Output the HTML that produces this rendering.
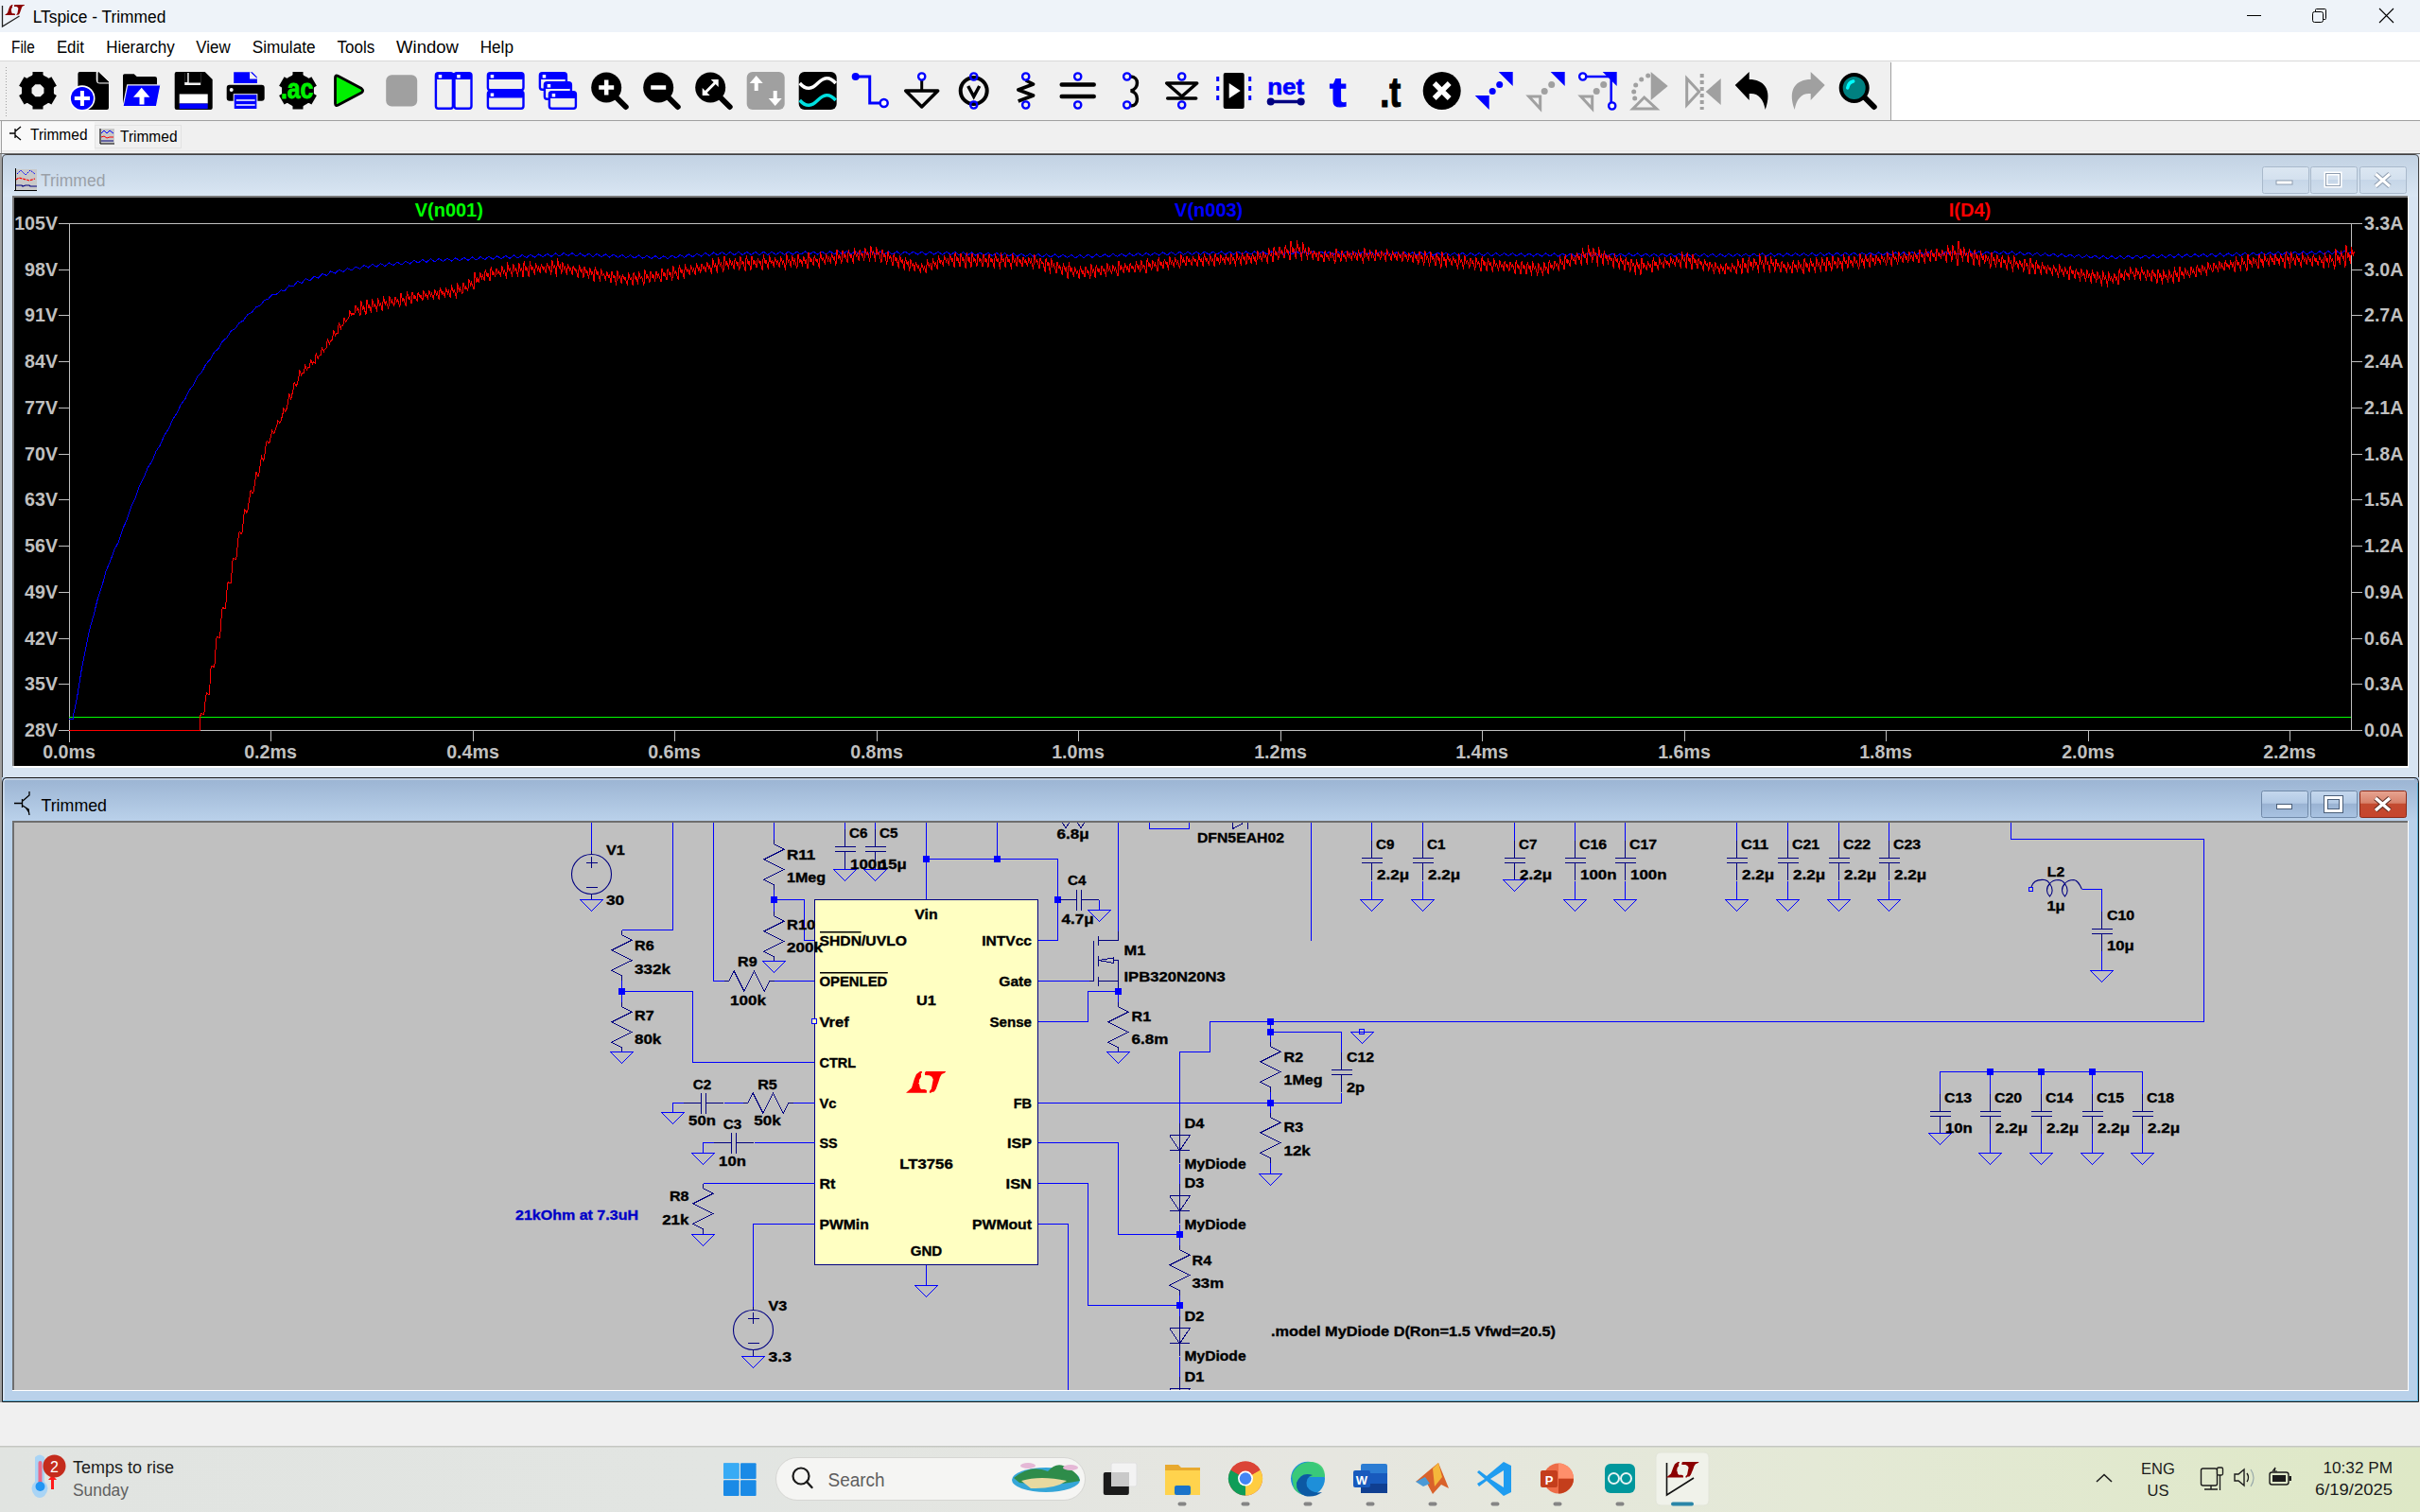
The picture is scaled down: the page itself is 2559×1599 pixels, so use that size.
<!DOCTYPE html><html><head><meta charset="utf-8"><title>LTspice - Trimmed</title><style>html,body{margin:0;padding:0;overflow:hidden;background:#f0f0f0;width:2559px;height:1599px}svg{display:block}text{white-space:pre}</style></head><body>
<svg width="2559" height="1599" viewBox="0 0 2559 1599">
<rect x="0" y="0" width="2559" height="1599" fill="#f0f0f0"/>
<rect x="0" y="0" width="2559" height="34" fill="#eef3f9"/>
<path d="M2.5,6 L2.5,28 L20.5,17" fill="none" stroke="#222" stroke-width="1.3"/>
<path transform="translate(5,5) scale(0.5,0.48)" d="M0.0,22.9 L6.0,17.5 L8.9,8.2 L11.0,3.2 L15.0,0.0 L16.9,0.0 L16.9,1.9 L15.9,2.1 L16.1,5.9 L14.0,9.0 L14.0,11.9 L12.9,12.5 L14.0,13.3 L14.8,17.5 L16.1,19.1 L19.8,19.1 L21.9,20.1 L21.9,22.9 Z M20.0,1.4 L21.1,0.0 L41.9,0.0 L41.9,0.8 L40.7,1.9 L37.8,3.2 L35.9,6.4 L34.6,10.6 L33.0,15.1 L31.7,18.8 L29.8,21.7 L26.9,22.0 L26.7,22.9 L24.9,22.9 L24.9,21.2 L26.9,18.6 L28.0,12.5 L28.8,8.5 L27.4,5.9 L24.8,4.3 L20.0,4.0 Z" fill="#8b0000"/>
<text x="34.7" y="23.6" font-family="Liberation Sans" font-size="17.5" font-weight="normal" fill="#000" text-anchor="start" textLength="140.7" lengthAdjust="spacingAndGlyphs">LTspice - Trimmed</text>
<line x1="2376" y1="16.5" x2="2391" y2="16.5" stroke="#000" stroke-width="1"/>
<rect x="2445.5" y="12.5" width="11" height="11" rx="2" fill="none" stroke="#000" stroke-width="1"/>
<path d="M2448.5,12.5 L2448.5,10.5 Q2448.5,9.5 2449.5,9.5 L2458.5,9.5 Q2459.5,9.5 2459.5,10.5 L2459.5,19.5 Q2459.5,20.5 2458.5,20.5 L2456.5,20.5" fill="none" stroke="#000" stroke-width="1"/>
<path d="M2516,9 L2531,24 M2531,9 L2516,24" stroke="#000" stroke-width="1.1"/>
<rect x="0" y="34" width="2559" height="30" fill="#ffffff"/>
<text x="12" y="55.8" font-family="Liberation Sans" font-size="18" font-weight="normal" fill="#000" text-anchor="start" textLength="24.8" lengthAdjust="spacingAndGlyphs">File</text>
<text x="59.9" y="55.8" font-family="Liberation Sans" font-size="18" font-weight="normal" fill="#000" text-anchor="start" textLength="29" lengthAdjust="spacingAndGlyphs">Edit</text>
<text x="112.2" y="55.8" font-family="Liberation Sans" font-size="18" font-weight="normal" fill="#000" text-anchor="start" textLength="72.5" lengthAdjust="spacingAndGlyphs">Hierarchy</text>
<text x="207.3" y="55.8" font-family="Liberation Sans" font-size="18" font-weight="normal" fill="#000" text-anchor="start" textLength="36.3" lengthAdjust="spacingAndGlyphs">View</text>
<text x="266.7" y="55.8" font-family="Liberation Sans" font-size="18" font-weight="normal" fill="#000" text-anchor="start" textLength="66.9" lengthAdjust="spacingAndGlyphs">Simulate</text>
<text x="356.6" y="55.8" font-family="Liberation Sans" font-size="18" font-weight="normal" fill="#000" text-anchor="start" textLength="39.6" lengthAdjust="spacingAndGlyphs">Tools</text>
<text x="419.1" y="55.8" font-family="Liberation Sans" font-size="18" font-weight="normal" fill="#000" text-anchor="start" textLength="65.7" lengthAdjust="spacingAndGlyphs">Window</text>
<text x="507.7" y="55.8" font-family="Liberation Sans" font-size="18" font-weight="normal" fill="#000" text-anchor="start" textLength="35.3" lengthAdjust="spacingAndGlyphs">Help</text>
<rect x="0" y="64" width="2559" height="1" fill="#d9d9d9"/>
<rect x="0" y="65" width="2000" height="62" fill="#f0f0f0"/>
<rect x="2000" y="65" width="559" height="62" fill="#ffffff"/>
<rect x="1999" y="66" width="1" height="61" fill="#a0a0a0"/>
<rect x="6" y="71" width="1" height="1" fill="#a0a0a0"/>
<rect x="6" y="74" width="1" height="1" fill="#a0a0a0"/>
<rect x="6" y="77" width="1" height="1" fill="#a0a0a0"/>
<rect x="6" y="80" width="1" height="1" fill="#a0a0a0"/>
<rect x="6" y="83" width="1" height="1" fill="#a0a0a0"/>
<rect x="6" y="86" width="1" height="1" fill="#a0a0a0"/>
<rect x="6" y="89" width="1" height="1" fill="#a0a0a0"/>
<rect x="6" y="92" width="1" height="1" fill="#a0a0a0"/>
<rect x="6" y="95" width="1" height="1" fill="#a0a0a0"/>
<rect x="6" y="98" width="1" height="1" fill="#a0a0a0"/>
<rect x="6" y="101" width="1" height="1" fill="#a0a0a0"/>
<rect x="6" y="104" width="1" height="1" fill="#a0a0a0"/>
<rect x="6" y="107" width="1" height="1" fill="#a0a0a0"/>
<rect x="6" y="110" width="1" height="1" fill="#a0a0a0"/>
<rect x="6" y="113" width="1" height="1" fill="#a0a0a0"/>
<rect x="6" y="116" width="1" height="1" fill="#a0a0a0"/>
<rect x="6" y="119" width="1" height="1" fill="#a0a0a0"/>
<rect x="6" y="122" width="1" height="1" fill="#a0a0a0"/>
<rect x="0" y="127" width="2559" height="1" fill="#a0a0a0"/>
<rect x="0" y="128" width="2559" height="35" fill="#f0f0f0"/>
<rect x="1" y="128" width="1" height="35" fill="#a0a0a0"/>
<rect x="2" y="129" width="98" height="30" fill="#f9f9f9"/>
<rect x="100.5" y="132.5" width="91" height="24" fill="#f0f0f0" stroke="#e3e3e3" stroke-width="1"/>
<path d="M10,141 L16,141 M16,136 L16,146 M16,139 L22,134 M16,143 L22,148" stroke="#000" stroke-width="1.3" fill="none"/>
<text x="32" y="148" font-family="Liberation Sans" font-size="16.5" font-weight="normal" fill="#000" text-anchor="start" textLength="60.5" lengthAdjust="spacingAndGlyphs">Trimmed</text>
<g transform="translate(105,136)"><rect x="0" y="0" width="16" height="16" fill="#c8c8c8"/><path d="M1,0 L1,16 L16,16" stroke="#000" stroke-width="1" fill="none"/><path d="M2,5 L5,2 L8,5 L11,2 L15,5" stroke="#0000ff" stroke-width="1" fill="none"/><path d="M2,9 L5,8 L8,10 L11,9 L15,9" stroke="#ff0000" stroke-width="1" fill="none"/><path d="M2,13 L15,13" stroke="#000080" stroke-width="1" fill="none"/></g>
<text x="127" y="149.8" font-family="Liberation Sans" font-size="16.5" font-weight="normal" fill="#000" text-anchor="start" textLength="60.5" lengthAdjust="spacingAndGlyphs">Trimmed</text>
<rect x="2" y="159" width="2557" height="1" fill="#e8e8e8"/>
<rect x="0" y="162" width="2559" height="1" fill="#6d6d6d"/>
<g transform="translate(19.7,76)"><circle cx="20.3" cy="19.8" r="17" fill="#000"/><path d="M14.8,0 L25.8,0 L25.8,3 L28,6 L12.6,6 L14.8,3 Z" fill="#000" transform="rotate(0 20.3 19.8)"/><path d="M14.8,0 L25.8,0 L25.8,3 L28,6 L12.6,6 L14.8,3 Z" fill="#000" transform="rotate(60 20.3 19.8)"/><path d="M14.8,0 L25.8,0 L25.8,3 L28,6 L12.6,6 L14.8,3 Z" fill="#000" transform="rotate(120 20.3 19.8)"/><path d="M14.8,0 L25.8,0 L25.8,3 L28,6 L12.6,6 L14.8,3 Z" fill="#000" transform="rotate(180 20.3 19.8)"/><path d="M14.8,0 L25.8,0 L25.8,3 L28,6 L12.6,6 L14.8,3 Z" fill="#000" transform="rotate(240 20.3 19.8)"/><path d="M14.8,0 L25.8,0 L25.8,3 L28,6 L12.6,6 L14.8,3 Z" fill="#000" transform="rotate(300 20.3 19.8)"/><polygon points="26.77,22.48 22.98,26.27 17.62,26.27 13.83,22.48 13.83,17.12 17.62,13.33 22.98,13.33 26.77,17.12" fill="#f0f0f0"/></g>
<g transform="translate(74.7,76)"><path d="M7.7,2 Q7.7,0 9.7,0 L27,0 L27,8 Q27,12.5 31,12.5 L40.3,12.5 L40.3,38 Q40.3,40 38.3,40 L9.7,40 Q7.7,40 7.7,38 Z" fill="#000"/><path d="M29.3,0.5 L40.3,10.9 L29.3,10.9 Z" fill="#000" stroke="#000" stroke-width="1" stroke-linejoin="round"/><circle cx="12.2" cy="27.9" r="13.6" fill="#fff"/><circle cx="12.2" cy="27.9" r="12" fill="#0000ff"/><path d="M12.2,20 L12.2,36 M4.1,27.9 L20.3,27.9" stroke="#fff" stroke-width="4"/></g>
<g transform="translate(129.7,76)"><path d="M0.3,4 Q0.3,2.3 2,2.3 L12,2.3 L15,5 L34,5 Q36.3,5 36.3,7 L36.3,36 L0.3,36 Z" fill="#000"/><path d="M5,13.8 L40.2,13.8 L35.7,36.6 L0.3,36.6 Z" fill="#0000ff" stroke="#f0f0f0" stroke-width="1.2"/><path d="M11.3,26.7 L20,16.7 L28.7,26.7 L22.8,26.7 L22.8,34.6 L17.8,34.6 L17.8,26.7 Z" fill="#fff"/></g>
<g transform="translate(184.7,76)"><path d="M0,2 Q0,0 2,0 L32,0 L40,8 L40,38 Q40,40 38,40 L2,40 Q0,40 0,38 Z" fill="#000"/><rect x="10.5" y="1" width="17" height="13" fill="#f0f0f0"/><rect x="10.5" y="0" width="3" height="11" fill="#000"/><rect x="15" y="0" width="12.5" height="11.5" fill="#000"/><rect x="5" y="23.5" width="30" height="10" fill="#fff"/><rect x="5" y="33.5" width="30" height="5.5" fill="#0000ff"/></g>
<g transform="translate(239.7,76)"><path d="M7.5,0.3 L27,0.3 L32.2,5.5 L32.2,12 L7.5,12 Z" fill="#0000ff"/><path d="M25,0.3 L25,7 L32.2,7" fill="#f0f0f0" stroke="#f0f0f0" stroke-width="1.2"/><rect x="0" y="13.8" width="40" height="17" rx="3" fill="#000"/><circle cx="5" cy="19" r="2" fill="#fff"/><rect x="7.5" y="23.7" width="24.7" height="15.8" fill="#0000ff" stroke="#f0f0f0" stroke-width="1"/><path d="M10,30 L30,30 M10,35 L30,35" stroke="#fff" stroke-width="1.6"/></g>
<g transform="translate(294.7,76)"><circle cx="20.3" cy="19.8" r="17" fill="#000"/><path d="M14.8,0 L25.8,0 L25.8,3 L28,6 L12.6,6 L14.8,3 Z" fill="#000" transform="rotate(0 20.3 19.8)"/><path d="M14.8,0 L25.8,0 L25.8,3 L28,6 L12.6,6 L14.8,3 Z" fill="#000" transform="rotate(60 20.3 19.8)"/><path d="M14.8,0 L25.8,0 L25.8,3 L28,6 L12.6,6 L14.8,3 Z" fill="#000" transform="rotate(120 20.3 19.8)"/><path d="M14.8,0 L25.8,0 L25.8,3 L28,6 L12.6,6 L14.8,3 Z" fill="#000" transform="rotate(180 20.3 19.8)"/><path d="M14.8,0 L25.8,0 L25.8,3 L28,6 L12.6,6 L14.8,3 Z" fill="#000" transform="rotate(240 20.3 19.8)"/><path d="M14.8,0 L25.8,0 L25.8,3 L28,6 L12.6,6 L14.8,3 Z" fill="#000" transform="rotate(300 20.3 19.8)"/><text x="2.2" y="27.9" font-family="Liberation Sans" font-weight="bold" font-size="29" fill="#00f000" stroke="#00f000" stroke-width="0.8" textLength="34.5" lengthAdjust="spacingAndGlyphs">.ac</text></g>
<g transform="translate(349.7,76)"><path d="M4.8,6 Q4.8,3 8,4.5 L32.5,17.5 Q35.5,19.8 32.5,22 L8,35 Q4.8,36.5 4.8,33.5 Z" fill="#00f000" stroke="#000" stroke-width="2.8" stroke-linejoin="round"/></g>
<g transform="translate(404.7,76)"><rect x="3.5" y="3.2" width="33" height="33.4" rx="6" fill="#a0a0a0"/></g>
<g transform="translate(459.7,76)"><rect x="1.2" y="1.2" width="18" height="37.5" rx="2.5" fill="none" stroke="#0000ff" stroke-width="2.4"/><rect x="20.8" y="1.2" width="18" height="37.5" rx="2.5" fill="none" stroke="#0000ff" stroke-width="2.4"/><rect x="1" y="1" width="38" height="7" rx="2" fill="#0000ff"/><rect x="4" y="3" width="3.5" height="3.5" fill="#fff"/><rect x="23.5" y="3" width="3.5" height="3.5" fill="#fff"/></g>
<g transform="translate(514.7,76)"><rect x="1.2" y="1.2" width="37.6" height="18" rx="2.5" fill="none" stroke="#0000ff" stroke-width="2.4"/><rect x="1.2" y="20.8" width="37.6" height="18" rx="2.5" fill="none" stroke="#0000ff" stroke-width="2.4"/><rect x="1" y="1" width="38" height="7" rx="2" fill="#0000ff"/><rect x="1" y="20.5" width="38" height="7" rx="2" fill="#0000ff"/><rect x="4" y="3" width="3.5" height="3.5" fill="#fff"/><rect x="4" y="22.5" width="3.5" height="3.5" fill="#fff"/></g>
<g transform="translate(569.7,76)"><rect x="1.2" y="1.2" width="28" height="17.5" rx="2.5" fill="#f0f0f0" stroke="#0000ff" stroke-width="2.4"/><rect x="1" y="1" width="28.4" height="7" rx="2" fill="#0000ff"/><rect x="4" y="3" width="3.5" height="3.5" fill="#fff"/><rect x="6.2" y="11.2" width="28" height="17.5" rx="2.5" fill="#f0f0f0" stroke="#0000ff" stroke-width="2.4"/><rect x="6" y="11" width="28.4" height="7" rx="2" fill="#0000ff"/><rect x="9" y="13" width="3.5" height="3.5" fill="#fff"/><rect x="11.2" y="21.2" width="28" height="17.5" rx="2.5" fill="#f0f0f0" stroke="#0000ff" stroke-width="2.4"/><rect x="11" y="21" width="28.4" height="7" rx="2" fill="#0000ff"/><rect x="14" y="23" width="3.5" height="3.5" fill="#fff"/></g>
<g transform="translate(624.7,76)"><path d="M27,27 L37,37" stroke="#000" stroke-width="6" stroke-linecap="round"/><circle cx="16.5" cy="16.5" r="16" fill="#000"/><path d="M16.5,8.5 L16.5,24.5 M8.5,16.5 L24.5,16.5" stroke="#fff" stroke-width="4.5"/></g>
<g transform="translate(679.7,76)"><path d="M27,27 L37,37" stroke="#000" stroke-width="6" stroke-linecap="round"/><circle cx="16.5" cy="16.5" r="16" fill="#000"/><path d="M8.5,16.5 L24.5,16.5" stroke="#fff" stroke-width="4.5"/></g>
<g transform="translate(734.7,76)"><path d="M27,27 L37,37" stroke="#000" stroke-width="6" stroke-linecap="round"/><circle cx="16.5" cy="16.5" r="16" fill="#000"/><path d="M10,23 L23,10" stroke="#fff" stroke-width="3"/><path d="M8,25 L8,17 L16,25 Z M25,8 L17,8 L25,16 Z" fill="#fff"/></g>
<g transform="translate(789.7,76)"><rect x="0" y="0" width="40" height="40" rx="6" fill="#a0a0a0"/><path d="M10,4 L3,12 L8,12 L8,20 L12,20 L12,12 L17,12 Z M30,36 L23,28 L28,28 L28,20 L32,20 L32,28 L37,28 Z" fill="#fff"/></g>
<g transform="translate(844.7,76)"><rect x="0" y="0" width="40" height="40" rx="6" fill="#000"/><path d="M1,12 C8,20 14,18 20,12 C26,6 32,4 39,12" stroke="#fff" stroke-width="3.5" fill="none"/><path d="M1,30 C8,38 14,36 20,30 C26,24 32,22 39,30" stroke="#00e0e0" stroke-width="3.5" fill="none"/></g>
<g transform="translate(899.7,76)"><path d="M5,5 L20,5 L20,33 L35,33" stroke="#0000ff" stroke-width="3" fill="none"/><circle cx="5" cy="5" r="4" fill="#0000ff"/><circle cx="35" cy="33" r="4" fill="#fff" stroke="#0000ff" stroke-width="2.5"/></g>
<g transform="translate(954.7,76)"><path d="M20,9 L20,20" stroke="#000" stroke-width="3"/><path d="M3,20 L37,20 L20,37 Z" fill="none" stroke="#000" stroke-width="3.5" stroke-linejoin="round"/><circle cx="20" cy="5" r="3.6" fill="#fff" stroke="#0000ff" stroke-width="2.4"/></g>
<g transform="translate(1009.7,76)"><circle cx="20" cy="20" r="14" fill="none" stroke="#000" stroke-width="4"/><path d="M14,15 L20,26 L26,15" stroke="#000" stroke-width="3.5" fill="none"/><circle cx="20" cy="5" r="3.6" fill="none" stroke="#0000ff" stroke-width="2.4"/><circle cx="20" cy="35" r="3.6" fill="none" stroke="#0000ff" stroke-width="2.4"/></g>
<g transform="translate(1064.7,76)"><path d="M20,9 L28,13 L12,19 L28,25 L12,31" stroke="#000" stroke-width="3.5" fill="none" stroke-linejoin="round"/><circle cx="20" cy="5" r="3.6" fill="none" stroke="#0000ff" stroke-width="2.4"/><circle cx="20" cy="35" r="3.6" fill="none" stroke="#0000ff" stroke-width="2.4"/></g>
<g transform="translate(1119.7,76)"><path d="M3,13.5 L37,13.5 M3,26 L37,26" stroke="#000" stroke-width="4.5" stroke-linecap="round"/><circle cx="20" cy="5" r="3.6" fill="none" stroke="#0000ff" stroke-width="2.4"/><circle cx="20" cy="35" r="3.6" fill="none" stroke="#0000ff" stroke-width="2.4"/></g>
<g transform="translate(1174.7,76)"><path d="M21,5 C30,5 30,18 21,20 C30,22 30,36 21,36" stroke="#000" stroke-width="3.5" fill="none"/><circle cx="17" cy="5" r="3.6" fill="none" stroke="#0000ff" stroke-width="2.4"/><circle cx="17" cy="35" r="3.6" fill="none" stroke="#0000ff" stroke-width="2.4"/></g>
<g transform="translate(1229.7,76)"><path d="M4,12 L36,12 L20,26 Z" fill="none" stroke="#000" stroke-width="3.5" stroke-linejoin="round"/><path d="M5,28 L35,28" stroke="#000" stroke-width="3.5" stroke-linecap="round"/><circle cx="20" cy="5" r="3.6" fill="none" stroke="#0000ff" stroke-width="2.4"/><circle cx="20" cy="35" r="3.6" fill="none" stroke="#0000ff" stroke-width="2.4"/></g>
<g transform="translate(1284.7,76)"><rect x="9" y="1" width="22" height="38" rx="2" fill="#000"/><path d="M15,12 L27,20 L15,28 Z" fill="#fff"/><path d="M3,5 L3,35 M37,5 L37,35" stroke="#0000ff" stroke-width="3" stroke-dasharray="5,5"/></g>
<g transform="translate(1339.7,76)"><text x="0.5" y="23.5" font-family="Liberation Sans" font-weight="bold" font-size="23" fill="#0000ff" stroke="#0000ff" stroke-width="0.6" textLength="39" lengthAdjust="spacingAndGlyphs">net</text><path d="M4,31.5 L36,31.5" stroke="#000080" stroke-width="3.5"/><circle cx="4" cy="31.5" r="4" fill="#000080"/><circle cx="36" cy="31.5" r="4" fill="#000080"/></g>
<g transform="translate(1394.7,76)"><text x="11.3" y="37.2" font-family="Liberation Sans" font-weight="bold" font-size="44" fill="#0000ff" stroke="#0000ff" stroke-width="1.2" textLength="17.6" lengthAdjust="spacingAndGlyphs">t</text></g>
<g transform="translate(1449.7,76)"><text x="9.5" y="37.2" font-family="Liberation Sans" font-weight="bold" font-size="44" fill="#000" stroke="#000" stroke-width="1.2" textLength="22" lengthAdjust="spacingAndGlyphs">.t</text></g>
<g transform="translate(1504.7,76)"><circle cx="20" cy="20" r="20" fill="#000"/><path d="M12,12 L28,28 M28,12 L12,28" stroke="#fff" stroke-width="5.5"/></g>
<g transform="translate(1559.7,76)"><path d="M0,25 L15,25 L15,40 Z M40,0 L25,0 L40,15 Z" fill="#0000ff"/><circle cx="18.5" cy="20.5" r="3.5" fill="#0000ff"/><circle cx="26" cy="13.5" r="3.5" fill="#0000ff"/></g>
<g transform="translate(1614.7,76)"><path d="M2,26 L14,26 L14,39 Z" fill="none" stroke="#a0a0a0" stroke-width="3"/><path d="M40,0 L25,0 L40,15 Z" fill="#0000ff"/><circle cx="18.5" cy="20.5" r="3.5" fill="#a0a0a0"/><circle cx="26" cy="13.5" r="3.5" fill="#a0a0a0"/></g>
<g transform="translate(1669.7,76)"><path d="M2,26 L14,26 L14,39 Z" fill="none" stroke="#a0a0a0" stroke-width="3"/><circle cx="18.5" cy="20.5" r="3.5" fill="#a0a0a0"/><circle cx="26" cy="13.5" r="3.5" fill="#a0a0a0"/><path d="M4,5 L34,5 L34,36" stroke="#0000ff" stroke-width="2.5" fill="none"/><path d="M40,0 L25,0 L40,15 Z" fill="#0000ff"/><circle cx="4" cy="5" r="3.6" fill="#fff" stroke="#0000ff" stroke-width="2.4"/><circle cx="35" cy="36" r="3.6" fill="#fff" stroke="#0000ff" stroke-width="2.4"/></g>
<g transform="translate(1724.7,76)"><path d="M21,0 L39,15 L21,30 Z" fill="#a0a0a0"/><path d="M2,39 L14,27 L27,39 Z" fill="none" stroke="#a0a0a0" stroke-width="3"/><circle cx="18" cy="4" r="2.5" fill="#a0a0a0"/><circle cx="11" cy="8" r="2.5" fill="#a0a0a0"/><circle cx="5" cy="14" r="2.5" fill="#a0a0a0"/><circle cx="3" cy="21" r="2.5" fill="#a0a0a0"/><circle cx="4" cy="28" r="2.5" fill="#a0a0a0"/></g>
<g transform="translate(1779.7,76)"><path d="M4,7 L17,21 L4,35 Z" fill="none" stroke="#a0a0a0" stroke-width="3"/><path d="M40,7 L24,21 L40,35 Z" fill="#a0a0a0"/><path d="M20,2 L20,40" stroke="#a0a0a0" stroke-width="4" stroke-dasharray="4,3"/></g>
<g transform="translate(1834.7,76)"><path d="M0,14 L15,0 L15,8 C30,8 40,18 32,40 C30,28 24,22 15,23 L15,30 Z" fill="#000"/></g>
<g transform="translate(1889.7,76)"><path d="M40,14 L25,0 L25,8 C10,8 0,18 8,40 C10,28 16,22 25,23 L25,30 Z" fill="#a0a0a0"/></g>
<g transform="translate(1944.7,76)"><path d="M26,26 L37,37" stroke="#000" stroke-width="6" stroke-linecap="round"/><circle cx="16" cy="17" r="14" fill="#008080" stroke="#000" stroke-width="4"/><path d="M9,17 Q10,11 15,10" stroke="#00ffff" stroke-width="3.5" fill="none" stroke-linecap="round"/></g>
<defs><linearGradient id="gInact" x1="0" y1="0" x2="0" y2="1"><stop offset="0" stop-color="#c2d2e3"/><stop offset="1" stop-color="#d9e6f3"/></linearGradient><linearGradient id="gAct" x1="0" y1="0" x2="0" y2="1"><stop offset="0" stop-color="#9bb4d3"/><stop offset="1" stop-color="#bad1ea"/></linearGradient><linearGradient id="bAct" x1="0" y1="0" x2="0" y2="1"><stop offset="0" stop-color="#c5d8ee"/><stop offset="0.45" stop-color="#b3cae5"/><stop offset="0.5" stop-color="#9ab3d3"/><stop offset="1" stop-color="#a9c3e2"/></linearGradient><linearGradient id="bClose" x1="0" y1="0" x2="0" y2="1"><stop offset="0" stop-color="#e7a592"/><stop offset="0.45" stop-color="#d8826b"/><stop offset="0.5" stop-color="#c34a30"/><stop offset="1" stop-color="#c7452d"/></linearGradient><linearGradient id="bInact" x1="0" y1="0" x2="0" y2="1"><stop offset="0" stop-color="#dce7f2"/><stop offset="0.5" stop-color="#d3e0ee"/><stop offset="0.5" stop-color="#c6d6e8"/><stop offset="1" stop-color="#d0deec"/></linearGradient></defs>
<rect x="0" y="163" width="2" height="1320" fill="#a0a0a0"/>
<rect x="2" y="163" width="2556" height="660" fill="#d7e4f2"/>
<rect x="3" y="164" width="2554" height="44" fill="url(#gInact)"/>
<path d="M2.5,822.5 L2.5,168 Q2.5,163.5 7,163.5 L2553,163.5 Q2557.5,163.5 2557.5,168 L2557.5,822.5" fill="none" stroke="#404040" stroke-width="1"/>
<g transform="translate(15,178)"><rect x="1" y="1" width="23" height="23" fill="#c8c8c8"/><path d="M1.5,0 L1.5,24 M0,23.5 L24,23.5" stroke="#000" stroke-width="1"/><path d="M3,6 L7,2 L12,7 L17,2 L22,6" stroke="#0000ff" stroke-width="1" stroke-dasharray="2,1" fill="none"/><path d="M2,12 L5,10 L9,11 L13,12 L16,13 L22,11" stroke="#ff0000" stroke-width="1.2" stroke-dasharray="3,1" fill="none"/><path d="M2,18 L8,18 L9,19 L12,18 L16,18 L17,19 L24,19" stroke="#000080" stroke-width="1.2" fill="none"/></g>
<text x="43" y="197.4" font-family="Liberation Sans" font-size="17.5" font-weight="normal" fill="#9aa0a8" text-anchor="start" >Trimmed</text>
<rect x="2392.5" y="176.5" width="49" height="28" rx="2" fill="url(#bInact)" stroke="#a9b9cb" stroke-width="1"/>
<rect x="2443.5" y="176.5" width="49" height="28" rx="2" fill="url(#bInact)" stroke="#a9b9cb" stroke-width="1"/>
<rect x="2495.5" y="176.5" width="49" height="28" rx="2" fill="url(#bInact)" stroke="#a9b9cb" stroke-width="1"/>
<rect x="2407" y="191" width="17" height="4" fill="#fff" stroke="#8e9db0" stroke-width="1"/>
<rect x="2459.5" y="183.5" width="15" height="13" fill="none" stroke="#fff" stroke-width="4"/>
<rect x="2459.5" y="183.5" width="15" height="13" fill="none" stroke="#8e9db0" stroke-width="1"/>
<path d="M2512,184 L2527,197 M2527,184 L2512,197" stroke="#8e9db0" stroke-width="5"/>
<path d="M2512,184 L2527,197 M2527,184 L2512,197" stroke="#fff" stroke-width="3"/>
<rect x="2" y="822" width="2556" height="661" fill="#b9d1ea"/>
<rect x="3" y="823" width="2554" height="45" fill="url(#gAct)"/>
<path d="M2.5,1482.5 L2.5,828 Q2.5,822.5 7,822.5 L2553,822.5 Q2557.5,822.5 2557.5,828 L2557.5,1482.5 Z" fill="none" stroke="#1a1a1a" stroke-width="1"/>
<path d="M4,1481 L4,827 Q4,824 7,824 L2553,824" fill="none" stroke="#ffffff" stroke-opacity="0.7" stroke-width="1"/>
<path d="M2556.5,828 L2556.5,1481.5 L3,1481.5" fill="none" stroke="#2aa0d0" stroke-opacity="0.6" stroke-width="1"/>
<path d="M15,849.5 L23,849.5 M23.5,845 L23.5,854 M24,847 L31,841 L31,837 M24,852 L30,856 L31,862" stroke="#000" stroke-width="1.3" fill="none"/>
<path d="M27,855 L31,856 L30,859 Z" fill="#000"/>
<text x="43.5" y="858.4" font-family="Liberation Sans" font-size="17.8" font-weight="normal" fill="#000" text-anchor="start" >Trimmed</text>
<rect x="2391.5" y="836.5" width="49" height="28" rx="2" fill="url(#bAct)" stroke="#7089a8" stroke-width="1"/>
<rect x="2443.5" y="836.5" width="49" height="28" rx="2" fill="url(#bAct)" stroke="#7089a8" stroke-width="1"/>
<rect x="2495.5" y="836.5" width="49" height="28" rx="2" fill="url(#bClose)" stroke="#8a2a1a" stroke-width="1"/>
<rect x="2407.5" y="850.5" width="16" height="5" fill="#fff" stroke="#4a5e78" stroke-width="1"/>
<rect x="2459.5" y="843.5" width="16" height="14" fill="none" stroke="#4a5e78" stroke-width="5"/>
<rect x="2459.5" y="843.5" width="16" height="14" fill="none" stroke="#fff" stroke-width="3"/>
<path d="M2512,844 L2527,857 M2527,844 L2512,857" stroke="#5a2a20" stroke-width="5.5"/>
<path d="M2512,844 L2527,857 M2527,844 L2512,857" stroke="#fff" stroke-width="3.5"/>
<rect x="15" y="209" width="2531" height="601" fill="#000"/>
<rect x="13" y="207" width="2533" height="2" fill="#787878"/>
<rect x="13" y="207" width="2" height="603" fill="#787878"/>
<rect x="14" y="810" width="2533" height="2" fill="#ffffff"/>
<rect x="2546" y="208" width="1" height="604" fill="#ffffff"/>
<path d="M73.5,236 L73.5,785 M62,236.5 L2498,236.5 M62,772.5 L2498,772.5 M2486.5,236 L2486.5,772" stroke="#c0c0c0" stroke-width="1" fill="none"/>
<text x="61" y="242.8" font-family="Liberation Sans" font-size="20.3" font-weight="bold" fill="#c0c0c0" text-anchor="end" textLength="45.8" lengthAdjust="spacingAndGlyphs">105V</text>
<text x="2500" y="242.8" font-family="Liberation Sans" font-size="20.3" font-weight="bold" fill="#c0c0c0" text-anchor="start" textLength="41.4" lengthAdjust="spacingAndGlyphs">3.3A</text>
<path d="M62,285.5 L73,285.5 M2486,285.5 L2498,285.5" stroke="#c0c0c0" stroke-width="1"/>
<text x="61" y="291.8" font-family="Liberation Sans" font-size="20.3" font-weight="bold" fill="#c0c0c0" text-anchor="end" textLength="34.9" lengthAdjust="spacingAndGlyphs">98V</text>
<text x="2500" y="291.8" font-family="Liberation Sans" font-size="20.3" font-weight="bold" fill="#c0c0c0" text-anchor="start" textLength="41.4" lengthAdjust="spacingAndGlyphs">3.0A</text>
<path d="M62,333.5 L73,333.5 M2486,333.5 L2498,333.5" stroke="#c0c0c0" stroke-width="1"/>
<text x="61" y="339.8" font-family="Liberation Sans" font-size="20.3" font-weight="bold" fill="#c0c0c0" text-anchor="end" textLength="34.9" lengthAdjust="spacingAndGlyphs">91V</text>
<text x="2500" y="339.8" font-family="Liberation Sans" font-size="20.3" font-weight="bold" fill="#c0c0c0" text-anchor="start" textLength="41.4" lengthAdjust="spacingAndGlyphs">2.7A</text>
<path d="M62,382.5 L73,382.5 M2486,382.5 L2498,382.5" stroke="#c0c0c0" stroke-width="1"/>
<text x="61" y="388.8" font-family="Liberation Sans" font-size="20.3" font-weight="bold" fill="#c0c0c0" text-anchor="end" textLength="34.9" lengthAdjust="spacingAndGlyphs">84V</text>
<text x="2500" y="388.8" font-family="Liberation Sans" font-size="20.3" font-weight="bold" fill="#c0c0c0" text-anchor="start" textLength="41.4" lengthAdjust="spacingAndGlyphs">2.4A</text>
<path d="M62,431.5 L73,431.5 M2486,431.5 L2498,431.5" stroke="#c0c0c0" stroke-width="1"/>
<text x="61" y="437.8" font-family="Liberation Sans" font-size="20.3" font-weight="bold" fill="#c0c0c0" text-anchor="end" textLength="34.9" lengthAdjust="spacingAndGlyphs">77V</text>
<text x="2500" y="437.8" font-family="Liberation Sans" font-size="20.3" font-weight="bold" fill="#c0c0c0" text-anchor="start" textLength="41.4" lengthAdjust="spacingAndGlyphs">2.1A</text>
<path d="M62,480.5 L73,480.5 M2486,480.5 L2498,480.5" stroke="#c0c0c0" stroke-width="1"/>
<text x="61" y="486.8" font-family="Liberation Sans" font-size="20.3" font-weight="bold" fill="#c0c0c0" text-anchor="end" textLength="34.9" lengthAdjust="spacingAndGlyphs">70V</text>
<text x="2500" y="486.8" font-family="Liberation Sans" font-size="20.3" font-weight="bold" fill="#c0c0c0" text-anchor="start" textLength="41.4" lengthAdjust="spacingAndGlyphs">1.8A</text>
<path d="M62,528.5 L73,528.5 M2486,528.5 L2498,528.5" stroke="#c0c0c0" stroke-width="1"/>
<text x="61" y="534.8" font-family="Liberation Sans" font-size="20.3" font-weight="bold" fill="#c0c0c0" text-anchor="end" textLength="34.9" lengthAdjust="spacingAndGlyphs">63V</text>
<text x="2500" y="534.8" font-family="Liberation Sans" font-size="20.3" font-weight="bold" fill="#c0c0c0" text-anchor="start" textLength="41.4" lengthAdjust="spacingAndGlyphs">1.5A</text>
<path d="M62,577.5 L73,577.5 M2486,577.5 L2498,577.5" stroke="#c0c0c0" stroke-width="1"/>
<text x="61" y="583.8" font-family="Liberation Sans" font-size="20.3" font-weight="bold" fill="#c0c0c0" text-anchor="end" textLength="34.9" lengthAdjust="spacingAndGlyphs">56V</text>
<text x="2500" y="583.8" font-family="Liberation Sans" font-size="20.3" font-weight="bold" fill="#c0c0c0" text-anchor="start" textLength="41.4" lengthAdjust="spacingAndGlyphs">1.2A</text>
<path d="M62,626.5 L73,626.5 M2486,626.5 L2498,626.5" stroke="#c0c0c0" stroke-width="1"/>
<text x="61" y="632.8" font-family="Liberation Sans" font-size="20.3" font-weight="bold" fill="#c0c0c0" text-anchor="end" textLength="34.9" lengthAdjust="spacingAndGlyphs">49V</text>
<text x="2500" y="632.8" font-family="Liberation Sans" font-size="20.3" font-weight="bold" fill="#c0c0c0" text-anchor="start" textLength="41.4" lengthAdjust="spacingAndGlyphs">0.9A</text>
<path d="M62,675.5 L73,675.5 M2486,675.5 L2498,675.5" stroke="#c0c0c0" stroke-width="1"/>
<text x="61" y="681.8" font-family="Liberation Sans" font-size="20.3" font-weight="bold" fill="#c0c0c0" text-anchor="end" textLength="34.9" lengthAdjust="spacingAndGlyphs">42V</text>
<text x="2500" y="681.8" font-family="Liberation Sans" font-size="20.3" font-weight="bold" fill="#c0c0c0" text-anchor="start" textLength="41.4" lengthAdjust="spacingAndGlyphs">0.6A</text>
<path d="M62,723.5 L73,723.5 M2486,723.5 L2498,723.5" stroke="#c0c0c0" stroke-width="1"/>
<text x="61" y="729.8" font-family="Liberation Sans" font-size="20.3" font-weight="bold" fill="#c0c0c0" text-anchor="end" textLength="34.9" lengthAdjust="spacingAndGlyphs">35V</text>
<text x="2500" y="729.8" font-family="Liberation Sans" font-size="20.3" font-weight="bold" fill="#c0c0c0" text-anchor="start" textLength="41.4" lengthAdjust="spacingAndGlyphs">0.3A</text>
<text x="61" y="778.8" font-family="Liberation Sans" font-size="20.3" font-weight="bold" fill="#c0c0c0" text-anchor="end" textLength="34.9" lengthAdjust="spacingAndGlyphs">28V</text>
<text x="2500" y="778.8" font-family="Liberation Sans" font-size="20.3" font-weight="bold" fill="#c0c0c0" text-anchor="start" textLength="41.4" lengthAdjust="spacingAndGlyphs">0.0A</text>
<text x="73" y="801.8" font-family="Liberation Sans" font-size="20.3" font-weight="bold" fill="#c0c0c0" text-anchor="middle" textLength="55.6" lengthAdjust="spacingAndGlyphs">0.0ms</text>
<path d="M286.5,772 L286.5,784" stroke="#c0c0c0" stroke-width="1"/>
<text x="286" y="801.8" font-family="Liberation Sans" font-size="20.3" font-weight="bold" fill="#c0c0c0" text-anchor="middle" textLength="55.6" lengthAdjust="spacingAndGlyphs">0.2ms</text>
<path d="M500.5,772 L500.5,784" stroke="#c0c0c0" stroke-width="1"/>
<text x="500" y="801.8" font-family="Liberation Sans" font-size="20.3" font-weight="bold" fill="#c0c0c0" text-anchor="middle" textLength="55.6" lengthAdjust="spacingAndGlyphs">0.4ms</text>
<path d="M713.5,772 L713.5,784" stroke="#c0c0c0" stroke-width="1"/>
<text x="713" y="801.8" font-family="Liberation Sans" font-size="20.3" font-weight="bold" fill="#c0c0c0" text-anchor="middle" textLength="55.6" lengthAdjust="spacingAndGlyphs">0.6ms</text>
<path d="M927.5,772 L927.5,784" stroke="#c0c0c0" stroke-width="1"/>
<text x="927" y="801.8" font-family="Liberation Sans" font-size="20.3" font-weight="bold" fill="#c0c0c0" text-anchor="middle" textLength="55.6" lengthAdjust="spacingAndGlyphs">0.8ms</text>
<path d="M1140.5,772 L1140.5,784" stroke="#c0c0c0" stroke-width="1"/>
<text x="1140" y="801.8" font-family="Liberation Sans" font-size="20.3" font-weight="bold" fill="#c0c0c0" text-anchor="middle" textLength="55.6" lengthAdjust="spacingAndGlyphs">1.0ms</text>
<path d="M1354.5,772 L1354.5,784" stroke="#c0c0c0" stroke-width="1"/>
<text x="1354" y="801.8" font-family="Liberation Sans" font-size="20.3" font-weight="bold" fill="#c0c0c0" text-anchor="middle" textLength="55.6" lengthAdjust="spacingAndGlyphs">1.2ms</text>
<path d="M1567.5,772 L1567.5,784" stroke="#c0c0c0" stroke-width="1"/>
<text x="1567" y="801.8" font-family="Liberation Sans" font-size="20.3" font-weight="bold" fill="#c0c0c0" text-anchor="middle" textLength="55.6" lengthAdjust="spacingAndGlyphs">1.4ms</text>
<path d="M1781.5,772 L1781.5,784" stroke="#c0c0c0" stroke-width="1"/>
<text x="1781" y="801.8" font-family="Liberation Sans" font-size="20.3" font-weight="bold" fill="#c0c0c0" text-anchor="middle" textLength="55.6" lengthAdjust="spacingAndGlyphs">1.6ms</text>
<path d="M1994.5,772 L1994.5,784" stroke="#c0c0c0" stroke-width="1"/>
<text x="1994" y="801.8" font-family="Liberation Sans" font-size="20.3" font-weight="bold" fill="#c0c0c0" text-anchor="middle" textLength="55.6" lengthAdjust="spacingAndGlyphs">1.8ms</text>
<path d="M2208.5,772 L2208.5,784" stroke="#c0c0c0" stroke-width="1"/>
<text x="2208" y="801.8" font-family="Liberation Sans" font-size="20.3" font-weight="bold" fill="#c0c0c0" text-anchor="middle" textLength="55.6" lengthAdjust="spacingAndGlyphs">2.0ms</text>
<path d="M2421.5,772 L2421.5,784" stroke="#c0c0c0" stroke-width="1"/>
<text x="2421" y="801.8" font-family="Liberation Sans" font-size="20.3" font-weight="bold" fill="#c0c0c0" text-anchor="middle" textLength="55.6" lengthAdjust="spacingAndGlyphs">2.2ms</text>
<text x="474.8" y="229" font-family="Liberation Sans" font-size="20.6" font-weight="bold" fill="#00ff00" text-anchor="middle" textLength="72.2" lengthAdjust="spacingAndGlyphs">V(n001)</text>
<text x="1278.2" y="229" font-family="Liberation Sans" font-size="20.6" font-weight="bold" fill="#0000ff" text-anchor="middle" textLength="72.2" lengthAdjust="spacingAndGlyphs">V(n003)</text>
<text x="2083" y="229" font-family="Liberation Sans" font-size="20.6" font-weight="bold" fill="#ff0000" text-anchor="middle" textLength="44.4" lengthAdjust="spacingAndGlyphs">I(D4)</text>
<path d="M73,758.5 L2486,758.5" stroke="#00ff00" stroke-width="1.2"/>
<path d="M73.0,760.5 L77.0,760.5 L77.0,759.0 L81.4,738.5 L85.8,710.6 L90.2,687.9 L94.6,666.1 L99.0,650.7 L103.4,632.9 L107.8,620.0 L112.2,603.7 L116.6,593.4 L121.0,581.2 L125.4,573.0 L129.8,559.3 L134.2,549.6 L138.6,536.2 L143.0,527.2 L147.4,514.2 L151.8,505.6 L156.2,494.8 L160.6,488.1 L165.0,477.3 L169.4,470.8 L173.8,460.4 L178.2,453.9 L182.6,443.5 L187.0,437.1 L191.4,427.5 L195.8,422.0 L200.2,412.5 L204.6,407.0 L209.0,398.2 L213.4,393.6 L217.8,385.0 L222.2,380.4 L226.6,372.4 L231.0,368.7 L235.4,360.9 L239.8,357.2 L244.2,350.2 L248.6,347.8 L253.0,341.4 L257.4,339.0 L261.8,332.6 L266.2,330.6 L270.6,325.0 L275.0,323.3 L279.4,317.7 L283.8,316.0 L288.2,311.2 L292.6,311.1 L297.0,306.9 L301.4,307.3 L305.8,301.9 L310.2,302.9 L314.6,297.5 L319.0,299.4 L323.4,294.8 L327.8,296.7 L332.2,292.2 L336.6,294.1 L341.0,289.6 L345.4,291.4 L349.8,286.9 L354.2,289.2 L358.6,285.2 L363.0,287.6 L367.4,283.6 L371.8,286.0 L376.2,282.0 L380.6,284.4 L385.0,280.4 L389.4,283.0 L393.8,279.4 L398.2,282.2 L402.6,278.7 L407.0,281.5 L411.4,277.9 L415.8,280.7 L420.2,277.1 L424.6,279.9 L429.0,276.3 L433.4,279.0 L437.8,275.4 L442.2,278.1 L446.6,274.5 L451.0,277.3 L455.4,273.8 L459.8,276.8 L464.2,273.4 L468.6,276.5 L473.0,273.1 L477.4,276.1 L481.8,272.7 L486.2,275.8 L490.6,272.4 L495.0,275.4 L499.4,272.0 L503.8,275.0 L508.2,271.6 L512.6,274.6 L517.0,271.2 L521.4,274.2 L525.8,270.8 L530.2,273.8 L534.6,270.4 L539.0,273.4 L543.4,270.0 L547.8,273.0 L552.2,269.6 L556.6,272.6 L561.0,269.2 L565.4,272.2 L569.8,268.8 L574.2,271.8 L578.6,268.4 L583.0,271.4 L587.4,268.0 L591.8,271.0 L596.2,267.6 L600.6,270.6 L605.0,267.6 L609.4,270.9 L613.8,267.9 L618.2,271.2 L622.6,268.2 L627.0,271.5 L631.4,268.5 L635.8,271.8 L640.2,268.8 L644.6,272.1 L649.0,269.1 L653.4,272.4 L657.8,269.4 L662.2,272.7 L666.6,269.7 L671.0,273.0 L675.4,270.0 L679.8,273.3 L684.2,270.3 L688.6,273.6 L693.0,270.6 L697.4,273.9 L701.8,270.7 L706.2,273.6 L710.6,270.1 L715.0,273.0 L719.4,269.4 L723.8,272.3 L728.2,268.8 L732.6,271.7 L737.0,268.2 L741.4,271.1 L745.8,267.6 L750.2,270.5 L754.6,267.0 L759.0,269.9 L763.4,266.6 L767.8,269.7 L772.2,266.5 L776.6,269.7 L781.0,266.5 L785.4,269.6 L789.8,266.4 L794.2,269.6 L798.6,266.4 L803.0,269.5 L807.4,266.3 L811.8,269.5 L816.2,266.2 L820.6,269.4 L825.0,266.2 L829.4,269.4 L833.8,266.1 L838.2,269.3 L842.6,266.1 L847.0,269.2 L851.4,266.0 L855.8,269.2 L860.2,266.0 L864.6,269.1 L869.0,265.9 L873.4,269.1 L877.8,265.8 L882.2,269.0 L886.6,265.8 L891.0,269.0 L895.4,265.7 L899.8,268.9 L904.2,265.7 L908.6,268.9 L913.0,265.8 L917.4,269.0 L921.8,265.8 L926.2,269.0 L930.6,265.9 L935.0,269.1 L939.4,265.9 L943.8,269.1 L948.2,265.9 L952.6,269.2 L957.0,266.0 L961.4,269.2 L965.8,266.0 L970.2,269.3 L974.6,266.1 L979.0,269.3 L983.4,266.1 L987.8,269.3 L992.2,266.2 L996.6,269.4 L1001.0,266.2 L1005.4,269.5 L1009.8,266.4 L1014.2,269.7 L1018.6,266.7 L1023.0,270.0 L1027.4,266.9 L1031.8,270.2 L1036.2,267.1 L1040.6,270.4 L1045.0,267.3 L1049.4,270.6 L1053.8,267.5 L1058.2,270.8 L1062.6,267.7 L1067.0,271.0 L1071.4,267.9 L1075.8,271.3 L1080.2,268.2 L1084.6,271.5 L1089.0,268.4 L1093.4,271.7 L1097.8,268.6 L1102.2,271.9 L1106.6,268.8 L1111.0,272.1 L1115.4,269.0 L1119.8,272.3 L1124.2,269.2 L1128.6,272.5 L1133.0,269.5 L1137.4,272.8 L1141.8,269.5 L1146.2,272.6 L1150.6,269.2 L1155.0,272.3 L1159.4,269.0 L1163.8,272.0 L1168.2,268.7 L1172.6,271.8 L1177.0,268.4 L1181.4,271.5 L1185.8,268.2 L1190.2,271.2 L1194.6,267.9 L1199.0,271.0 L1203.4,267.6 L1207.8,270.7 L1212.2,267.4 L1216.6,270.4 L1221.0,267.1 L1225.4,270.2 L1229.8,266.8 L1234.2,269.9 L1238.6,266.5 L1243.0,269.6 L1247.4,266.3 L1251.8,269.4 L1256.2,266.2 L1260.6,269.4 L1265.0,266.1 L1269.4,269.3 L1273.8,266.1 L1278.2,269.3 L1282.6,266.1 L1287.0,269.2 L1291.4,266.0 L1295.8,269.2 L1300.2,266.0 L1304.6,269.2 L1309.0,266.0 L1313.4,269.1 L1317.8,265.9 L1322.2,269.1 L1326.6,265.9 L1331.0,269.1 L1335.4,265.8 L1339.8,269.0 L1344.2,265.8 L1348.6,269.0 L1353.0,265.8 L1357.4,269.0 L1361.8,265.7 L1366.2,268.9 L1370.6,265.7 L1375.0,268.9 L1379.4,265.8 L1383.8,269.0 L1388.2,265.9 L1392.6,269.1 L1397.0,265.9 L1401.4,269.2 L1405.8,266.0 L1410.2,269.3 L1414.6,266.1 L1419.0,269.3 L1423.4,266.2 L1427.8,269.4 L1432.2,266.3 L1436.6,269.5 L1441.0,266.3 L1445.4,269.6 L1449.8,266.4 L1454.2,269.7 L1458.6,266.5 L1463.0,269.7 L1467.4,266.6 L1471.8,269.8 L1476.2,266.7 L1480.6,269.9 L1485.0,266.7 L1489.4,270.0 L1493.8,266.8 L1498.2,270.0 L1502.6,266.9 L1507.0,270.1 L1511.4,267.0 L1515.8,270.2 L1520.2,267.0 L1524.6,270.3 L1529.0,267.1 L1533.4,270.4 L1537.8,267.2 L1542.2,270.4 L1546.6,267.3 L1551.0,270.5 L1555.4,267.4 L1559.8,270.6 L1564.2,267.4 L1568.6,270.7 L1573.0,267.5 L1577.4,270.8 L1581.8,267.6 L1586.2,270.8 L1590.6,267.7 L1595.0,270.9 L1599.4,267.7 L1603.8,271.0 L1608.2,267.8 L1612.6,271.1 L1617.0,267.9 L1621.4,271.1 L1625.8,268.0 L1630.2,271.2 L1634.6,268.0 L1639.0,271.2 L1643.4,268.0 L1647.8,271.2 L1652.2,268.0 L1656.6,271.2 L1661.0,268.0 L1665.4,271.2 L1669.8,268.0 L1674.2,271.2 L1678.6,268.0 L1683.0,271.2 L1687.4,268.0 L1691.8,271.2 L1696.2,268.0 L1700.6,271.2 L1705.0,268.0 L1709.4,271.2 L1713.8,268.0 L1718.2,271.2 L1722.6,268.0 L1727.0,271.2 L1731.4,268.0 L1735.8,271.2 L1740.2,268.0 L1744.6,271.3 L1749.0,268.1 L1753.4,271.3 L1757.8,268.1 L1762.2,271.3 L1766.6,268.2 L1771.0,271.4 L1775.4,268.2 L1779.8,271.4 L1784.2,268.2 L1788.6,271.5 L1793.0,268.3 L1797.4,271.5 L1801.8,268.3 L1806.2,271.5 L1810.6,268.4 L1815.0,271.6 L1819.4,268.4 L1823.8,271.6 L1828.2,268.3 L1832.6,271.5 L1837.0,268.2 L1841.4,271.4 L1845.8,268.2 L1850.2,271.3 L1854.6,268.1 L1859.0,271.2 L1863.4,268.0 L1867.8,271.2 L1872.2,267.9 L1876.6,271.1 L1881.0,267.8 L1885.4,271.0 L1889.8,267.8 L1894.2,270.9 L1898.6,267.7 L1903.0,270.8 L1907.4,267.6 L1911.8,270.8 L1916.2,267.5 L1920.6,270.7 L1925.0,267.4 L1929.4,270.6 L1933.8,267.4 L1938.2,270.5 L1942.6,267.3 L1947.0,270.5 L1951.4,267.2 L1955.8,270.4 L1960.2,267.1 L1964.6,270.3 L1969.0,267.1 L1973.4,270.2 L1977.8,267.0 L1982.2,270.1 L1986.6,266.9 L1991.0,270.1 L1995.4,266.8 L1999.8,270.0 L2004.2,266.7 L2008.6,269.9 L2013.0,266.7 L2017.4,269.8 L2021.8,266.6 L2026.2,269.7 L2030.6,266.5 L2035.0,269.7 L2039.4,266.4 L2043.8,269.6 L2048.2,266.3 L2052.6,269.5 L2057.0,266.3 L2061.4,269.4 L2065.8,266.2 L2070.2,269.3 L2074.6,266.1 L2079.0,269.3 L2083.4,266.0 L2087.8,269.2 L2092.2,265.9 L2096.6,269.1 L2101.0,265.9 L2105.4,269.0 L2109.8,265.8 L2114.2,269.0 L2118.6,265.7 L2123.0,269.0 L2127.4,266.0 L2131.8,269.4 L2136.2,266.5 L2140.6,269.9 L2145.0,266.9 L2149.4,270.3 L2153.8,267.3 L2158.2,270.7 L2162.6,267.7 L2167.0,271.1 L2171.4,268.1 L2175.8,271.5 L2180.2,268.5 L2184.6,271.9 L2189.0,268.9 L2193.4,272.3 L2197.8,269.3 L2202.2,272.7 L2206.6,269.7 L2211.0,273.1 L2215.4,270.1 L2219.8,273.5 L2224.2,270.5 L2228.6,273.9 L2233.0,270.7 L2237.4,273.8 L2241.8,270.5 L2246.2,273.6 L2250.6,270.3 L2255.0,273.4 L2259.4,270.1 L2263.8,273.2 L2268.2,269.9 L2272.6,273.0 L2277.0,269.7 L2281.4,272.8 L2285.8,269.5 L2290.2,272.5 L2294.6,269.2 L2299.0,272.3 L2303.4,269.0 L2307.8,272.1 L2312.2,268.8 L2316.6,271.9 L2321.0,268.6 L2325.4,271.7 L2329.8,268.4 L2334.2,271.5 L2338.6,268.2 L2343.0,271.3 L2347.4,268.0 L2351.8,271.1 L2356.2,267.8 L2360.6,270.8 L2365.0,267.5 L2369.4,270.6 L2373.8,267.3 L2378.2,270.4 L2382.6,267.1 L2387.0,270.2 L2391.4,266.9 L2395.8,270.0 L2400.2,266.7 L2404.6,269.8 L2409.0,266.5 L2413.4,269.6 L2417.8,266.3 L2422.2,269.4 L2426.6,266.2 L2431.0,269.3 L2435.4,266.0 L2439.8,269.1 L2444.2,265.8 L2448.6,268.9 L2453.0,265.6 L2457.4,268.8 L2461.8,265.5 L2466.2,268.6 L2470.6,265.3 L2475.0,268.4 L2479.4,265.1 L2483.8,268.2 L2486.0,266.6" stroke="#0000ff" stroke-width="1" fill="none" shape-rendering="crispEdges"/>
<path d="M73.0,772.5 L211.5,772.5 L212.0,756.6 L213.0,754.0 L215.0,755.5 L215.8,754.8 L217.6,736.2 L218.6,733.0 L220.6,734.8 L221.4,734.0 L223.0,706.9 L224.0,703.8 L226.0,705.6 L226.8,704.8 L228.8,675.6 L229.8,673.4 L231.8,674.7 L232.6,674.1 L234.7,644.7 L235.7,642.5 L237.7,643.8 L238.5,643.2 L240.5,617.7 L241.5,615.5 L243.5,616.8 L244.3,616.2 L246.0,592.8 L247.0,589.9 L249.0,591.6 L249.8,590.8 L252.2,566.7 L253.2,562.1 L255.2,564.7 L256.0,563.6 L257.9,545.0 L258.9,538.5 L260.9,542.2 L261.7,540.6 L264.2,524.7 L265.2,518.4 L267.2,522.0 L268.0,520.5 L270.0,507.1 L271.0,499.4 L273.0,503.8 L273.8,501.9 L275.5,489.9 L276.5,482.6 L278.5,486.8 L279.3,484.9 L281.2,470.8 L282.2,466.1 L284.2,468.8 L285.0,467.6 L286.7,460.6 L287.7,455.3 L289.7,458.3 L290.5,457.0 L292.9,449.5 L293.9,444.7 L295.9,447.5 L296.7,446.3 L298.9,438.3 L299.9,431.8 L301.9,435.5 L302.7,433.9 L304.6,425.7 L305.6,416.5 L307.6,421.8 L308.4,419.5 L310.1,411.2 L311.1,404.6 L313.1,408.4 L313.9,406.8 L315.7,401.1 L316.7,391.1 L318.7,396.8 L319.5,394.4 L321.5,394.3 L322.5,386.3 L324.5,390.9 L325.3,388.9 L327.5,388.7 L328.5,380.0 L330.5,385.0 L331.3,382.8 L333.2,384.0 L334.2,373.4 L336.2,379.5 L337.0,376.8 L339.3,375.2 L340.3,367.6 L342.3,372.0 L343.1,370.1 L345.3,367.5 L346.3,358.4 L348.3,363.7 L349.1,361.4 L351.6,359.2 L352.6,349.0 L354.6,354.9 L355.4,352.3 L357.3,352.5 L358.3,340.9 L360.3,347.6 L361.1,344.7 L362.8,344.4 L363.8,335.8 L365.8,340.7 L366.6,338.6 L368.9,336.3 L369.9,329.2 L371.9,333.2 L372.7,331.5 L374.8,332.7 L375.8,322.8 L377.8,328.5 L378.6,326.0 L380.9,334.3 L381.9,318.5 L383.9,327.6 L384.7,323.6 L386.9,333.4 L387.9,316.8 L389.9,326.3 L390.7,322.2 L392.6,331.4 L393.6,316.2 L395.6,325.0 L396.4,321.2 L398.6,329.6 L399.6,315.4 L401.6,323.6 L402.4,320.0 L404.4,329.4 L405.4,313.0 L407.4,322.5 L408.2,318.4 L410.8,326.6 L411.8,313.2 L413.8,320.9 L414.6,317.6 L416.8,323.7 L417.8,313.7 L419.8,319.4 L420.6,316.9 L422.9,324.8 L423.9,310.0 L425.9,318.6 L426.7,314.9 L429.3,324.3 L430.3,308.0 L432.3,317.4 L433.1,313.3 L435.0,321.3 L436.0,308.6 L438.0,315.9 L438.8,312.8 L441.1,318.6 L442.1,308.9 L444.1,314.5 L444.9,312.0 L446.9,318.3 L447.9,307.4 L449.9,313.6 L450.7,310.9 L452.5,317.0 L453.5,307.0 L455.5,312.8 L456.3,310.3 L458.6,316.4 L459.6,305.8 L461.6,311.9 L462.4,309.2 L464.3,316.6 L465.3,303.9 L467.3,311.2 L468.1,308.0 L470.5,314.4 L471.5,304.2 L473.5,310.1 L474.3,307.5 L476.4,315.4 L477.4,301.4 L479.4,309.5 L480.2,306.0 L482.7,315.6 L483.7,299.4 L485.7,308.7 L486.5,304.7 L488.9,311.0 L489.9,299.2 L491.9,306.0 L492.7,303.0 L494.8,307.5 L495.8,295.1 L497.8,302.2 L498.6,299.1 L501.0,305.9 L502.0,288.5 L504.0,298.5 L504.8,294.2 L506.6,299.0 L507.6,288.1 L509.6,294.4 L510.4,291.6 L512.2,296.9 L513.2,285.5 L515.2,292.1 L516.0,289.2 L518.1,297.0 L519.1,282.6 L521.1,290.9 L521.9,287.3 L523.8,293.2 L524.8,283.7 L526.8,289.1 L527.6,286.8 L529.6,293.3 L530.6,280.8 L532.6,288.0 L533.4,284.8 L535.6,294.8 L536.6,277.5 L538.6,287.4 L539.4,283.1 L541.7,292.6 L542.7,278.9 L544.7,286.8 L545.5,283.3 L547.7,292.9 L548.7,277.8 L550.7,286.5 L551.5,282.7 L553.1,293.4 L554.1,276.6 L556.1,286.3 L556.9,282.1 L559.3,292.9 L560.3,276.3 L562.3,285.9 L563.1,281.7 L565.5,290.6 L566.5,277.9 L568.5,285.2 L569.3,282.0 L571.3,289.0 L572.3,278.7 L574.3,284.6 L575.1,282.0 L577.3,289.2 L578.3,277.7 L580.3,284.3 L581.1,281.5 L582.8,290.9 L583.8,275.4 L585.8,284.3 L586.6,280.4 L588.4,292.6 L589.4,273.1 L591.4,284.3 L592.2,279.5 L593.8,290.3 L594.8,277.4 L596.8,284.8 L597.6,281.6 L599.4,290.6 L600.4,279.1 L602.4,285.7 L603.2,282.8 L605.1,290.7 L606.1,281.0 L608.1,286.6 L608.9,284.1 L611.4,294.2 L612.4,279.7 L614.4,288.1 L615.2,284.4 L617.0,293.7 L618.0,282.2 L620.0,288.8 L620.8,285.9 L622.7,295.2 L623.7,282.7 L625.7,289.9 L626.5,286.8 L628.2,298.2 L629.2,281.7 L631.2,291.2 L632.0,287.1 L634.6,297.7 L635.6,284.4 L637.6,292.1 L638.4,288.8 L640.5,297.2 L641.5,287.0 L643.5,292.9 L644.3,290.3 L646.0,299.3 L647.0,287.0 L649.0,294.0 L649.8,291.0 L651.7,302.3 L652.7,286.0 L654.7,295.3 L655.5,291.3 L657.2,300.0 L658.2,290.3 L660.2,295.8 L661.0,293.4 L663.6,302.1 L664.6,288.3 L666.6,296.3 L667.4,292.8 L669.1,301.6 L670.1,287.7 L672.1,295.7 L672.9,292.2 L674.6,301.0 L675.6,287.2 L677.6,295.1 L678.4,291.7 L680.9,301.7 L681.9,285.1 L683.9,294.7 L684.7,290.5 L687.0,298.6 L688.0,287.0 L690.0,293.7 L690.8,290.7 L692.8,297.6 L693.8,286.7 L695.8,293.0 L696.6,290.3 L699.0,298.1 L700.0,284.3 L702.0,292.2 L702.8,288.8 L705.1,296.2 L706.1,284.0 L708.1,291.0 L708.9,287.9 L710.8,297.1 L711.8,281.0 L713.8,290.3 L714.6,286.2 L717.2,296.1 L718.2,279.7 L720.2,289.1 L721.0,285.0 L723.4,294.9 L724.4,278.7 L726.4,288.0 L727.2,283.9 L729.5,291.3 L730.5,280.0 L732.5,286.5 L733.3,283.7 L735.4,290.8 L736.4,278.4 L738.4,285.5 L739.2,282.4 L740.8,288.5 L741.8,278.7 L743.8,284.3 L744.6,281.9 L746.5,288.4 L747.5,276.8 L749.5,283.4 L750.3,280.5 L752.6,290.1 L753.6,272.8 L755.6,282.8 L756.4,278.4 L758.5,289.0 L759.5,271.8 L761.5,281.7 L762.3,277.4 L764.9,288.0 L765.9,270.7 L767.9,280.7 L768.7,276.3 L770.6,284.8 L771.6,273.5 L773.6,280.0 L774.4,277.2 L776.2,284.5 L777.2,273.4 L779.2,279.8 L780.0,277.0 L781.9,286.0 L782.9,271.4 L784.9,279.8 L785.7,276.2 L788.2,286.7 L789.2,270.3 L791.2,279.7 L792.0,275.6 L794.0,285.7 L795.0,270.8 L797.0,279.4 L797.8,275.7 L800.2,283.1 L801.2,272.9 L803.2,278.8 L804.0,276.2 L806.3,286.3 L807.3,269.3 L809.3,279.1 L810.1,274.8 L812.5,285.4 L813.5,269.7 L815.5,278.7 L816.3,274.8 L818.4,282.8 L819.4,271.9 L821.4,278.2 L822.2,275.4 L824.5,283.2 L825.5,271.0 L827.5,278.0 L828.3,275.0 L830.7,285.6 L831.7,268.2 L833.7,278.2 L834.5,273.8 L836.5,283.1 L837.5,270.3 L839.5,277.6 L840.3,274.4 L842.9,284.1 L843.9,268.7 L845.9,277.6 L846.7,273.7 L848.5,281.5 L849.5,270.9 L851.5,277.0 L852.3,274.4 L854.0,284.4 L855.0,267.5 L857.0,277.3 L857.8,273.0 L860.2,280.8 L861.2,270.1 L863.2,276.3 L864.0,273.6 L866.4,283.5 L867.4,266.0 L869.4,276.0 L870.2,271.7 L872.5,280.2 L873.5,267.8 L875.5,274.9 L876.3,271.8 L878.4,278.6 L879.4,268.0 L881.4,274.1 L882.2,271.4 L883.9,281.4 L884.9,263.9 L886.9,273.9 L887.7,269.6 L889.9,278.8 L890.9,265.0 L892.9,272.9 L893.7,269.5 L896.2,277.7 L897.2,264.6 L899.2,272.1 L900.0,268.9 L902.5,278.5 L903.5,262.3 L905.5,271.6 L906.3,267.6 L908.1,275.6 L909.1,263.9 L911.1,270.6 L911.9,267.7 L913.8,276.2 L914.8,261.9 L916.8,270.1 L917.6,266.5 L919.8,277.1 L920.8,259.6 L922.8,269.6 L923.6,265.3 L925.6,276.6 L926.6,261.3 L928.6,270.1 L929.4,266.3 L931.9,278.3 L932.9,263.7 L934.9,272.1 L935.7,268.4 L937.8,280.0 L938.8,265.7 L940.8,274.0 L941.6,270.4 L944.1,281.4 L945.1,268.4 L947.1,275.9 L947.9,272.6 L950.4,283.7 L951.4,270.1 L953.4,278.0 L954.2,274.6 L956.3,285.7 L957.3,271.9 L959.3,279.9 L960.1,276.4 L961.8,287.1 L962.8,274.0 L964.8,281.6 L965.6,278.3 L967.3,287.2 L968.3,277.6 L970.3,283.1 L971.1,280.7 L973.5,289.1 L974.5,278.2 L976.5,284.4 L977.3,281.7 L979.4,289.4 L980.4,273.9 L982.4,282.8 L983.2,278.9 L985.4,285.7 L986.4,273.5 L988.4,280.5 L989.2,277.5 L991.3,284.7 L992.3,270.6 L994.3,278.7 L995.1,275.2 L997.5,280.7 L998.5,270.4 L1000.5,276.3 L1001.3,273.7 L1003.4,280.6 L1004.4,269.0 L1006.4,275.7 L1007.2,272.8 L1009.1,282.8 L1010.1,267.0 L1012.1,276.1 L1012.9,272.2 L1015.0,282.1 L1016.0,268.0 L1018.0,276.1 L1018.8,272.6 L1021.2,283.7 L1022.2,266.7 L1024.2,276.5 L1025.0,272.3 L1027.0,282.6 L1028.0,268.1 L1030.0,276.5 L1030.8,272.8 L1032.9,282.4 L1033.9,268.7 L1035.9,276.5 L1036.7,273.1 L1039.0,282.3 L1040.0,269.1 L1042.0,276.7 L1042.8,273.4 L1045.0,282.5 L1046.0,269.1 L1048.0,276.8 L1048.8,273.5 L1051.3,283.6 L1052.3,268.4 L1054.3,277.1 L1055.1,273.3 L1057.6,284.7 L1058.6,267.5 L1060.6,277.4 L1061.4,273.1 L1063.2,283.3 L1064.2,269.2 L1066.2,277.3 L1067.0,273.8 L1069.6,284.6 L1070.6,268.2 L1072.6,277.7 L1073.4,273.6 L1075.1,281.8 L1076.1,271.3 L1078.1,277.4 L1078.9,274.7 L1081.0,281.8 L1082.0,271.7 L1084.0,277.5 L1084.8,274.9 L1086.6,281.9 L1087.6,271.8 L1089.6,277.6 L1090.4,275.1 L1092.7,285.0 L1093.7,269.1 L1095.7,278.2 L1096.5,274.2 L1099.0,284.0 L1100.0,273.2 L1102.0,279.4 L1102.8,276.7 L1105.1,287.6 L1106.1,272.7 L1108.1,281.2 L1108.9,277.5 L1110.6,289.9 L1111.6,273.2 L1113.6,282.8 L1114.4,278.6 L1117.0,288.8 L1118.0,277.5 L1120.0,284.0 L1120.8,281.1 L1123.3,291.1 L1124.3,278.3 L1126.3,285.7 L1127.1,282.5 L1129.2,295.0 L1130.2,277.4 L1132.2,287.5 L1133.0,283.1 L1135.5,293.2 L1136.5,282.3 L1138.5,288.6 L1139.3,285.8 L1141.3,295.2 L1142.3,281.5 L1144.3,289.4 L1145.1,286.0 L1147.0,293.3 L1148.0,282.2 L1150.0,288.6 L1150.8,285.8 L1152.8,294.9 L1153.8,279.5 L1155.8,288.4 L1156.6,284.5 L1158.2,293.7 L1159.2,279.7 L1161.2,287.7 L1162.0,284.2 L1164.0,290.9 L1165.0,281.3 L1167.0,286.8 L1167.8,284.4 L1169.7,292.8 L1170.7,278.2 L1172.7,286.6 L1173.5,283.0 L1175.7,290.0 L1176.7,279.9 L1178.7,285.7 L1179.5,283.2 L1182.0,292.3 L1183.0,276.3 L1185.0,285.5 L1185.8,281.5 L1188.4,288.8 L1189.4,278.5 L1191.4,284.4 L1192.2,281.8 L1194.1,288.0 L1195.1,278.2 L1197.1,283.8 L1197.9,281.4 L1200.3,288.3 L1201.3,276.6 L1203.3,283.4 L1204.1,280.4 L1205.8,288.4 L1206.8,275.4 L1208.8,282.9 L1209.6,279.7 L1212.1,289.3 L1213.1,273.1 L1215.1,282.4 L1215.9,278.4 L1217.8,285.9 L1218.8,275.1 L1220.8,281.3 L1221.6,278.6 L1224.1,286.8 L1225.1,272.6 L1227.1,280.8 L1227.9,277.2 L1230.2,284.1 L1231.2,273.8 L1233.2,279.7 L1234.0,277.1 L1235.6,285.8 L1236.6,270.7 L1238.6,279.4 L1239.4,275.6 L1241.5,282.6 L1242.5,272.5 L1244.5,278.3 L1245.3,275.8 L1247.8,284.1 L1248.8,269.4 L1250.8,277.8 L1251.6,274.2 L1254.0,281.1 L1255.0,270.9 L1257.0,276.7 L1257.8,274.2 L1260.3,280.7 L1261.3,270.7 L1263.3,276.5 L1264.1,274.0 L1266.5,282.1 L1267.5,268.9 L1269.5,276.5 L1270.3,273.2 L1272.3,282.3 L1273.3,268.3 L1275.3,276.4 L1276.1,272.9 L1278.6,281.0 L1279.6,269.3 L1281.6,276.0 L1282.4,273.1 L1284.1,281.8 L1285.1,268.0 L1287.1,276.0 L1287.9,272.5 L1289.8,279.9 L1290.8,269.5 L1292.8,275.5 L1293.6,272.9 L1295.3,279.5 L1296.3,269.6 L1298.3,275.3 L1299.1,272.8 L1300.9,280.4 L1301.9,268.3 L1303.9,275.3 L1304.7,272.3 L1306.6,282.0 L1307.6,266.3 L1309.6,275.4 L1310.4,271.4 L1312.3,280.8 L1313.3,267.2 L1315.3,275.0 L1316.1,271.6 L1317.9,280.0 L1318.9,267.6 L1320.9,274.7 L1321.7,271.6 L1323.3,279.4 L1324.3,267.8 L1326.3,274.5 L1327.1,271.6 L1328.7,280.4 L1329.7,264.9 L1331.7,273.8 L1332.5,269.9 L1334.7,276.9 L1335.7,265.8 L1337.7,272.2 L1338.5,269.4 L1340.5,278.7 L1341.5,261.6 L1343.5,271.4 L1344.3,267.1 L1346.1,277.1 L1347.1,260.9 L1349.1,270.2 L1349.9,266.2 L1351.9,274.6 L1352.9,261.0 L1354.9,268.8 L1355.7,265.4 L1358.1,273.4 L1359.1,259.5 L1361.1,267.5 L1361.9,264.0 L1364.0,275.4 L1365.0,255.1 L1367.0,266.8 L1367.8,261.7 L1370.4,273.9 L1371.4,254.4 L1373.4,265.6 L1374.2,260.7 L1376.6,276.1 L1377.6,256.0 L1379.6,267.5 L1380.4,262.5 L1382.7,274.7 L1383.7,261.1 L1385.7,268.9 L1386.5,265.5 L1388.4,274.6 L1389.4,264.7 L1391.4,270.4 L1392.2,267.9 L1394.0,276.2 L1395.0,266.1 L1397.0,271.9 L1397.8,269.4 L1400.1,276.9 L1401.1,265.3 L1403.1,272.0 L1403.9,269.1 L1405.7,276.1 L1406.7,265.9 L1408.7,271.8 L1409.5,269.2 L1411.9,279.2 L1412.9,262.6 L1414.9,272.1 L1415.7,268.0 L1418.0,276.7 L1419.0,264.9 L1421.0,271.7 L1421.8,268.7 L1423.6,276.6 L1424.6,264.7 L1426.6,271.6 L1427.4,268.6 L1429.5,276.0 L1430.5,265.2 L1432.5,271.4 L1433.3,268.7 L1435.3,276.3 L1436.3,264.6 L1438.3,271.4 L1439.1,268.4 L1441.7,279.1 L1442.7,261.6 L1444.7,271.7 L1445.5,267.3 L1447.6,276.0 L1448.6,264.5 L1450.6,271.1 L1451.4,268.3 L1454.0,276.2 L1455.0,264.1 L1457.0,271.1 L1457.8,268.0 L1459.8,274.8 L1460.8,265.3 L1462.8,270.8 L1463.6,268.4 L1465.5,276.9 L1466.5,263.5 L1468.5,271.2 L1469.3,267.9 L1471.4,276.2 L1472.4,265.1 L1474.4,271.5 L1475.2,268.7 L1477.3,275.9 L1478.3,266.3 L1480.3,271.8 L1481.1,269.4 L1483.0,276.7 L1484.0,266.4 L1486.0,272.3 L1486.8,269.8 L1488.8,276.9 L1489.8,267.1 L1491.8,272.8 L1492.6,270.3 L1494.2,278.4 L1495.2,266.4 L1497.2,273.3 L1498.0,270.3 L1499.9,280.0 L1500.9,265.7 L1502.9,274.0 L1503.7,270.4 L1505.8,281.2 L1506.8,265.5 L1508.8,274.5 L1509.6,270.6 L1511.8,281.6 L1512.8,266.2 L1514.8,275.0 L1515.6,271.2 L1518.1,280.9 L1519.1,268.2 L1521.1,275.5 L1521.9,272.3 L1523.9,283.9 L1524.9,266.3 L1526.9,276.4 L1527.7,272.0 L1529.4,283.4 L1530.4,268.0 L1532.4,276.8 L1533.2,273.0 L1535.4,281.2 L1536.4,271.4 L1538.4,277.0 L1539.2,274.6 L1541.7,285.3 L1542.7,268.5 L1544.7,278.2 L1545.5,274.0 L1547.7,285.3 L1548.7,269.8 L1550.7,278.7 L1551.5,274.8 L1553.9,283.5 L1554.9,272.9 L1556.9,279.0 L1557.7,276.3 L1559.8,285.6 L1560.8,272.0 L1562.8,279.8 L1563.6,276.4 L1566.1,287.4 L1567.1,271.3 L1569.1,280.5 L1569.9,276.5 L1572.3,287.0 L1573.3,272.8 L1575.3,281.0 L1576.1,277.4 L1578.6,288.0 L1579.6,272.9 L1581.6,281.6 L1582.4,277.8 L1584.7,286.7 L1585.7,275.3 L1587.7,281.9 L1588.5,279.0 L1590.1,286.8 L1591.1,276.2 L1593.1,282.3 L1593.9,279.6 L1595.9,287.2 L1596.9,276.8 L1598.9,282.8 L1599.7,280.2 L1602.1,289.6 L1603.1,275.5 L1605.1,283.6 L1605.9,280.1 L1608.1,290.4 L1609.1,275.8 L1611.1,284.2 L1611.9,280.5 L1614.2,290.4 L1615.2,276.9 L1617.2,284.7 L1618.0,281.3 L1619.6,292.1 L1620.6,276.1 L1622.6,285.3 L1623.4,281.3 L1625.8,291.5 L1626.8,277.9 L1628.8,285.7 L1629.6,282.3 L1631.7,291.7 L1632.7,276.8 L1634.7,285.4 L1635.5,281.7 L1637.2,290.3 L1638.2,274.8 L1640.2,283.7 L1641.0,279.8 L1642.8,285.8 L1643.8,275.7 L1645.8,281.5 L1646.6,279.0 L1648.5,286.7 L1649.5,271.3 L1651.5,280.2 L1652.3,276.3 L1654.1,285.0 L1655.1,269.5 L1657.1,278.4 L1657.9,274.5 L1660.5,282.0 L1661.5,268.5 L1663.5,276.2 L1664.3,272.9 L1666.3,280.1 L1667.3,266.7 L1669.3,274.4 L1670.1,271.1 L1672.3,280.5 L1673.3,262.5 L1675.3,272.9 L1676.1,268.3 L1678.4,280.0 L1679.4,259.3 L1681.4,271.2 L1682.2,266.0 L1683.8,278.3 L1684.8,261.6 L1686.8,271.2 L1687.6,267.0 L1689.5,281.8 L1690.5,261.2 L1692.5,273.0 L1693.3,267.9 L1695.2,280.7 L1696.2,265.4 L1698.2,274.2 L1699.0,270.4 L1700.6,279.5 L1701.6,269.5 L1703.6,275.2 L1704.4,272.7 L1706.3,283.5 L1707.3,268.5 L1709.3,277.2 L1710.1,273.4 L1712.4,285.2 L1713.4,270.2 L1715.4,278.8 L1716.2,275.0 L1718.1,286.1 L1719.1,272.4 L1721.1,280.2 L1721.9,276.8 L1723.9,287.5 L1724.9,274.1 L1726.9,281.8 L1727.7,278.5 L1729.4,290.7 L1730.4,273.9 L1732.4,283.6 L1733.2,279.4 L1735.0,290.9 L1736.0,273.4 L1738.0,283.5 L1738.8,279.1 L1741.4,286.0 L1742.4,276.3 L1744.4,281.8 L1745.2,279.4 L1747.2,288.3 L1748.2,272.0 L1750.2,281.4 L1751.0,277.3 L1753.6,285.7 L1754.6,272.5 L1756.6,280.1 L1757.4,276.8 L1759.3,283.8 L1760.3,272.5 L1762.3,279.0 L1763.1,276.2 L1765.6,282.7 L1766.6,271.5 L1768.6,277.9 L1769.4,275.1 L1771.6,281.4 L1772.6,270.8 L1774.6,276.9 L1775.4,274.2 L1777.5,283.8 L1778.5,266.5 L1780.5,276.4 L1781.3,272.1 L1783.1,283.6 L1784.1,267.4 L1786.1,276.7 L1786.9,272.7 L1789.0,285.4 L1790.0,268.7 L1792.0,278.3 L1792.8,274.1 L1795.1,284.4 L1796.1,272.9 L1798.1,279.5 L1798.9,276.7 L1801.4,287.0 L1802.4,273.6 L1804.4,281.3 L1805.2,277.9 L1806.8,286.5 L1807.8,276.9 L1809.8,282.4 L1810.6,280.1 L1812.7,289.9 L1813.7,276.7 L1815.7,284.3 L1816.5,281.0 L1818.4,290.1 L1819.4,279.4 L1821.4,285.6 L1822.2,282.9 L1824.1,290.3 L1825.1,278.2 L1827.1,285.1 L1827.9,282.1 L1830.4,288.0 L1831.4,278.4 L1833.4,283.9 L1834.2,281.5 L1836.5,290.4 L1837.5,274.0 L1839.5,283.4 L1840.3,279.3 L1842.0,289.8 L1843.0,272.8 L1845.0,282.6 L1845.8,278.3 L1848.2,288.7 L1849.2,271.9 L1851.2,281.6 L1852.0,277.3 L1853.8,285.6 L1854.8,273.1 L1856.8,280.3 L1857.6,277.2 L1859.6,288.6 L1860.6,268.2 L1862.6,280.0 L1863.4,274.8 L1865.6,287.8 L1866.6,270.2 L1868.6,280.3 L1869.4,275.9 L1871.5,289.0 L1872.5,270.9 L1874.5,281.3 L1875.3,276.8 L1876.9,287.6 L1877.9,274.1 L1879.9,281.9 L1880.7,278.5 L1883.1,288.0 L1884.1,275.7 L1886.1,282.8 L1886.9,279.7 L1889.5,288.5 L1890.5,277.0 L1892.5,283.6 L1893.3,280.7 L1895.1,289.1 L1896.1,275.4 L1898.1,283.3 L1898.9,279.9 L1900.7,288.1 L1901.7,275.5 L1903.7,282.8 L1904.5,279.6 L1907.1,289.7 L1908.1,272.9 L1910.1,282.6 L1910.9,278.4 L1913.3,288.1 L1914.3,273.5 L1916.3,281.9 L1917.1,278.2 L1919.6,288.9 L1920.6,271.7 L1922.6,281.6 L1923.4,277.3 L1925.6,287.5 L1926.6,272.1 L1928.6,280.9 L1929.4,277.1 L1931.0,287.1 L1932.0,271.6 L1934.0,280.5 L1934.8,276.6 L1936.9,286.7 L1937.9,271.0 L1939.9,280.0 L1940.7,276.1 L1942.9,284.3 L1943.9,272.5 L1945.9,279.3 L1946.7,276.3 L1948.4,286.5 L1949.4,269.4 L1951.4,279.2 L1952.2,274.9 L1953.9,284.2 L1954.9,270.8 L1956.9,278.5 L1957.7,275.1 L1959.6,283.0 L1960.6,271.0 L1962.6,277.9 L1963.4,274.9 L1965.8,285.3 L1966.8,267.8 L1968.8,277.8 L1969.6,273.5 L1971.4,283.5 L1972.4,268.6 L1974.4,277.2 L1975.2,273.4 L1977.1,282.6 L1978.1,268.6 L1980.1,276.6 L1980.9,273.1 L1982.9,280.6 L1983.9,269.7 L1985.9,275.9 L1986.7,273.2 L1988.5,280.3 L1989.5,269.1 L1991.5,275.5 L1992.3,272.7 L1994.8,280.9 L1995.8,267.3 L1997.8,275.1 L1998.6,271.7 L2000.4,282.1 L2001.4,265.2 L2003.4,274.9 L2004.2,270.7 L2006.8,279.7 L2007.8,266.5 L2009.8,274.1 L2010.6,270.8 L2012.3,278.2 L2013.3,267.1 L2015.3,273.5 L2016.1,270.7 L2017.8,278.3 L2018.8,266.0 L2020.8,273.1 L2021.6,270.0 L2023.3,277.4 L2024.3,266.0 L2026.3,272.6 L2027.1,269.7 L2029.0,278.3 L2030.0,264.1 L2032.0,272.3 L2032.8,268.7 L2035.3,278.5 L2036.3,262.9 L2038.3,271.8 L2039.1,267.9 L2041.1,276.6 L2042.1,263.7 L2044.1,271.1 L2044.9,267.9 L2047.0,276.0 L2048.0,263.4 L2050.0,270.6 L2050.8,267.5 L2052.7,274.2 L2053.7,264.2 L2055.7,269.9 L2056.5,267.4 L2058.4,278.3 L2059.4,259.1 L2061.4,270.1 L2062.2,265.3 L2063.9,277.4 L2064.9,259.1 L2066.9,269.6 L2067.7,265.0 L2070.0,281.3 L2071.0,254.8 L2073.0,270.0 L2073.8,263.4 L2075.6,277.4 L2076.6,261.4 L2078.6,270.6 L2079.4,266.6 L2081.2,277.9 L2082.2,263.6 L2084.2,271.9 L2085.0,268.3 L2087.1,280.9 L2088.1,263.6 L2090.1,273.5 L2090.9,269.2 L2093.3,281.6 L2094.3,265.0 L2096.3,274.5 L2097.1,270.4 L2098.8,279.1 L2099.8,269.3 L2101.8,274.9 L2102.6,272.5 L2104.9,283.6 L2105.9,266.8 L2107.9,276.4 L2108.7,272.2 L2110.7,283.3 L2111.7,269.0 L2113.7,277.2 L2114.5,273.6 L2116.1,283.3 L2117.1,270.6 L2119.1,277.9 L2119.9,274.8 L2122.5,286.1 L2123.5,269.9 L2125.5,279.2 L2126.3,275.2 L2128.7,287.8 L2129.7,270.3 L2131.7,280.3 L2132.5,276.0 L2134.4,285.1 L2135.4,274.7 L2137.4,280.7 L2138.2,278.1 L2139.9,287.7 L2140.9,274.0 L2142.9,281.9 L2143.7,278.4 L2146.0,290.4 L2147.0,273.2 L2149.0,283.1 L2149.8,278.8 L2152.1,290.2 L2153.1,275.4 L2155.1,283.9 L2155.9,280.2 L2158.3,290.5 L2159.3,277.2 L2161.3,284.8 L2162.1,281.5 L2164.2,289.7 L2165.2,279.9 L2167.2,285.6 L2168.0,283.1 L2170.4,291.5 L2171.4,280.1 L2173.4,286.7 L2174.2,283.8 L2176.7,294.2 L2177.7,279.5 L2179.7,288.0 L2180.5,284.3 L2182.5,293.1 L2183.5,282.5 L2185.5,288.6 L2186.3,285.9 L2188.1,296.1 L2189.1,281.3 L2191.1,289.8 L2191.9,286.1 L2194.2,294.9 L2195.2,284.5 L2197.2,290.5 L2198.0,287.9 L2199.7,297.5 L2200.7,283.7 L2202.7,291.6 L2203.5,288.2 L2205.7,297.9 L2206.7,285.2 L2208.7,292.5 L2209.5,289.3 L2211.3,299.7 L2212.3,285.3 L2214.3,293.6 L2215.1,290.0 L2216.7,299.4 L2217.7,287.4 L2219.7,294.3 L2220.5,291.3 L2222.6,303.0 L2223.6,285.6 L2225.6,295.6 L2226.4,291.3 L2228.6,303.7 L2229.6,286.9 L2231.6,296.6 L2232.4,292.4 L2234.5,300.1 L2235.5,288.7 L2237.5,295.2 L2238.3,292.4 L2240.1,301.3 L2241.1,284.0 L2243.1,294.0 L2243.9,289.6 L2246.2,296.8 L2247.2,284.8 L2249.2,291.7 L2250.0,288.7 L2251.6,296.0 L2252.6,282.4 L2254.6,290.2 L2255.4,286.8 L2257.7,295.6 L2258.7,282.7 L2260.7,290.1 L2261.5,286.9 L2263.4,297.4 L2264.4,282.4 L2266.4,291.0 L2267.2,287.3 L2269.7,296.4 L2270.7,285.0 L2272.7,291.6 L2273.5,288.7 L2275.1,297.6 L2276.1,285.3 L2278.1,292.4 L2278.9,289.3 L2281.0,299.8 L2282.0,284.7 L2284.0,293.4 L2284.8,289.6 L2286.6,301.0 L2287.6,285.0 L2289.6,294.2 L2290.4,290.2 L2292.7,299.1 L2293.7,285.5 L2295.7,293.4 L2296.5,289.9 L2298.3,299.9 L2299.3,282.5 L2301.3,292.5 L2302.1,288.2 L2304.0,298.2 L2305.0,282.0 L2307.0,291.3 L2307.8,287.2 L2309.6,294.6 L2310.6,283.3 L2312.6,289.8 L2313.4,287.0 L2315.8,293.7 L2316.8,281.8 L2318.8,288.6 L2319.6,285.7 L2322.2,293.3 L2323.2,279.7 L2325.2,287.5 L2326.0,284.1 L2327.7,291.0 L2328.7,279.7 L2330.7,286.2 L2331.5,283.4 L2333.6,291.7 L2334.6,276.7 L2336.6,285.3 L2337.4,281.6 L2339.9,288.3 L2340.9,277.6 L2342.9,283.8 L2343.7,281.1 L2345.7,287.4 L2346.7,276.2 L2348.7,282.6 L2349.5,279.8 L2352.1,286.3 L2353.1,275.6 L2355.1,281.8 L2355.9,279.1 L2357.5,285.3 L2358.5,275.3 L2360.5,281.1 L2361.3,278.6 L2363.3,288.1 L2364.3,271.2 L2366.3,280.9 L2367.1,276.7 L2369.6,286.6 L2370.6,271.1 L2372.6,280.0 L2373.4,276.2 L2376.0,286.7 L2377.0,269.5 L2379.0,279.4 L2379.8,275.1 L2381.7,282.9 L2382.7,271.9 L2384.7,278.2 L2385.5,275.5 L2388.1,284.4 L2389.1,268.8 L2391.1,277.8 L2391.9,273.9 L2393.5,283.4 L2394.5,268.5 L2396.5,277.1 L2397.3,273.4 L2399.3,281.6 L2400.3,269.0 L2402.3,276.2 L2403.1,273.1 L2405.0,280.2 L2406.0,269.3 L2408.0,275.5 L2408.8,272.8 L2410.4,280.7 L2411.4,268.9 L2413.4,275.7 L2414.2,272.8 L2416.2,283.6 L2417.2,266.3 L2419.2,276.3 L2420.0,271.9 L2421.7,283.8 L2422.7,266.4 L2424.7,276.4 L2425.5,272.0 L2427.3,281.4 L2428.3,269.0 L2430.3,276.1 L2431.1,273.0 L2433.5,283.4 L2434.5,267.2 L2436.5,276.5 L2437.3,272.5 L2439.3,280.4 L2440.3,270.5 L2442.3,276.2 L2443.1,273.7 L2445.2,281.8 L2446.2,269.3 L2448.2,276.5 L2449.0,273.4 L2451.5,281.2 L2452.5,270.1 L2454.5,276.5 L2455.3,273.7 L2457.3,284.2 L2458.3,267.4 L2460.3,277.1 L2461.1,272.9 L2462.7,282.6 L2463.7,268.8 L2465.7,276.7 L2466.5,273.3 L2468.9,284.7 L2469.9,263.5 L2471.9,275.7 L2472.7,270.4 L2474.4,280.4 L2475.4,265.0 L2477.4,273.9 L2478.2,270.0 L2479.9,283.2 L2480.9,259.5 L2482.9,273.1 L2483.7,267.2 L2485.5,279.0 L2486.5,261.0 L2488.5,271.3 L2489.3,266.9 L2486.0,270.0" stroke="#ff0000" stroke-width="1" fill="none" shape-rendering="crispEdges"/>
<rect x="15" y="870" width="2531" height="600" fill="#c0c0c0"/>
<rect x="13" y="868" width="2533" height="2" fill="#6e6e6e"/>
<rect x="13" y="868" width="2" height="602" fill="#6e6e6e"/>
<rect x="13" y="1470" width="2534" height="1" fill="#ffffff"/>
<rect x="2546" y="868" width="1" height="603" fill="#ffffff"/>
<svg x="15" y="870" width="2531" height="600" viewBox="15 870 2531 600" overflow="hidden">
<path d="M625.5,869.5 L625.5,899.5" stroke="#0000ff" stroke-width="1" fill="none" shape-rendering="crispEdges"/>
<path d="M625.5,899.5 L625.5,903.5" stroke="#000080" stroke-width="1" fill="none" shape-rendering="crispEdges"/>
<circle cx="625.5" cy="924.5" r="21" stroke="#000080" stroke-width="1.1" fill="none"/><path d="M619.5,912.0 L631.5,912.0" stroke="#000080" stroke-width="1" fill="none" shape-rendering="crispEdges"/><path d="M625.5,906.0 L625.5,917.5" stroke="#000080" stroke-width="1" fill="none" shape-rendering="crispEdges"/><path d="M619.5,938.5 L631.5,938.5" stroke="#000080" stroke-width="1" fill="none" shape-rendering="crispEdges"/>
<path d="M625.5,945.5 L625.5,951.5" stroke="#000080" stroke-width="1" fill="none" shape-rendering="crispEdges"/>
<path d="M613.5,951.5 L637.5,951.5 L625.5,963.5 Z" stroke="#0000ff" stroke-width="1" fill="none" shape-rendering="crispEdges"/>


<path d="M711.5,869.5 L711.5,983.5 L657.5,983.5" stroke="#0000ff" stroke-width="1" fill="none" shape-rendering="crispEdges"/>
<path d="M657.5,983.5 L657.5,988.9 L668.2,994.2 L646.8,1004.9 L668.2,1015.6 L646.8,1026.3 L657.5,1031.7 L657.5,1037.0" stroke="#000080" stroke-width="1" fill="none" shape-rendering="crispEdges"/>
<path d="M657.5,1036.5 L657.5,1059.5" stroke="#0000ff" stroke-width="1" fill="none" shape-rendering="crispEdges"/>
<rect x="654" y="1045" width="7" height="7" fill="#0000ff"/>
<path d="M657.5,1059.5 L657.5,1064.8 L668.2,1070.2 L646.8,1080.9 L668.2,1091.6 L646.8,1102.3 L657.5,1107.7 L657.5,1113.0" stroke="#000080" stroke-width="1" fill="none" shape-rendering="crispEdges"/>
<path d="M645.5,1112.5 L669.5,1112.5 L657.5,1124.5 Z" stroke="#0000ff" stroke-width="1" fill="none" shape-rendering="crispEdges"/>




<path d="M657.5,1048.5 L732.5,1048.5 L732.5,1123.5 L861.5,1123.5" stroke="#0000ff" stroke-width="1" fill="none" shape-rendering="crispEdges"/>
<path d="M754.5,869.5 L754.5,1037.5 L765.5,1037.5" stroke="#0000ff" stroke-width="1" fill="none" shape-rendering="crispEdges"/>
<path d="M765.5,1037.5 L770.9,1037.5 L776.2,1026.8 L786.9,1048.2 L797.6,1026.8 L808.3,1048.2 L813.6,1037.5 L819.0,1037.5" stroke="#000080" stroke-width="1" fill="none" shape-rendering="crispEdges"/>
<path d="M818.5,1037.5 L861.5,1037.5" stroke="#0000ff" stroke-width="1" fill="none" shape-rendering="crispEdges"/>


<path d="M818.5,869.5 L818.5,887.5" stroke="#0000ff" stroke-width="1" fill="none" shape-rendering="crispEdges"/>
<path d="M818.5,887.5 L818.5,892.9 L829.2,898.2 L807.8,908.9 L829.2,919.6 L807.8,930.3 L818.5,935.6 L818.5,941.0" stroke="#000080" stroke-width="1" fill="none" shape-rendering="crispEdges"/>
<path d="M818.5,940.5 L818.5,963.5" stroke="#0000ff" stroke-width="1" fill="none" shape-rendering="crispEdges"/>
<rect x="815" y="948" width="7" height="7" fill="#0000ff"/>
<path d="M818.5,963.5 L818.5,968.9 L829.2,974.2 L807.8,984.9 L829.2,995.6 L807.8,1006.3 L818.5,1011.6 L818.5,1017.0" stroke="#000080" stroke-width="1" fill="none" shape-rendering="crispEdges"/>
<path d="M806.5,1016.5 L830.5,1016.5 L818.5,1028.5 Z" stroke="#0000ff" stroke-width="1" fill="none" shape-rendering="crispEdges"/>
<path d="M818.5,951.5 L850.5,951.5 L850.5,994.5 L861.5,994.5" stroke="#0000ff" stroke-width="1" fill="none" shape-rendering="crispEdges"/>




<path d="M893.5,869.5 L893.5,876.5" stroke="#0000ff" stroke-width="1" fill="none" shape-rendering="crispEdges"/>
<path d="M893.5,876.5 L893.5,895.2" stroke="#000080" stroke-width="1" fill="none" shape-rendering="crispEdges"/><path d="M882.5,895.2 L904.5,895.2" stroke="#000080" stroke-width="1" fill="none" shape-rendering="crispEdges"/><path d="M882.5,900.5 L904.5,900.5" stroke="#000080" stroke-width="1" fill="none" shape-rendering="crispEdges"/><path d="M893.5,900.5 L893.5,919.3" stroke="#000080" stroke-width="1" fill="none" shape-rendering="crispEdges"/>
<path d="M881.5,919.5 L905.5,919.5 L893.5,931.5 Z" stroke="#0000ff" stroke-width="1" fill="none" shape-rendering="crispEdges"/>
<path d="M925.5,869.5 L925.5,876.5" stroke="#0000ff" stroke-width="1" fill="none" shape-rendering="crispEdges"/>
<path d="M925.5,876.5 L925.5,895.2" stroke="#000080" stroke-width="1" fill="none" shape-rendering="crispEdges"/><path d="M914.5,895.2 L936.5,895.2" stroke="#000080" stroke-width="1" fill="none" shape-rendering="crispEdges"/><path d="M914.5,900.5 L936.5,900.5" stroke="#000080" stroke-width="1" fill="none" shape-rendering="crispEdges"/><path d="M925.5,900.5 L925.5,919.3" stroke="#000080" stroke-width="1" fill="none" shape-rendering="crispEdges"/>
<path d="M913.5,919.5 L937.5,919.5 L925.5,931.5 Z" stroke="#0000ff" stroke-width="1" fill="none" shape-rendering="crispEdges"/>




<path d="M979.5,869.5 L979.5,951.5" stroke="#0000ff" stroke-width="1" fill="none" shape-rendering="crispEdges"/>
<rect x="976" y="905" width="7" height="7" fill="#0000ff"/>
<path d="M979.5,908.5 L1118.5,908.5 L1118.5,994.5 L1097.5,994.5" stroke="#0000ff" stroke-width="1" fill="none" shape-rendering="crispEdges"/>
<path d="M1054.5,869.5 L1054.5,908.5" stroke="#0000ff" stroke-width="1" fill="none" shape-rendering="crispEdges"/>
<rect x="1051" y="905" width="7" height="7" fill="#0000ff"/>
<rect x="1115" y="948" width="7" height="7" fill="#0000ff"/>
<path d="M1118.5,951.5 L1119.5,951.5" stroke="#0000ff" stroke-width="1" fill="none" shape-rendering="crispEdges"/>
<path d="M1119.5,951.5 L1138.2,951.5" stroke="#000080" stroke-width="1" fill="none" shape-rendering="crispEdges"/><path d="M1138.2,940.5 L1138.2,962.5" stroke="#000080" stroke-width="1" fill="none" shape-rendering="crispEdges"/><path d="M1143.5,940.5 L1143.5,962.5" stroke="#000080" stroke-width="1" fill="none" shape-rendering="crispEdges"/><path d="M1143.5,951.5 L1162.3,951.5" stroke="#000080" stroke-width="1" fill="none" shape-rendering="crispEdges"/>
<path d="M1162.5,951.5 L1162.5,962.5" stroke="#0000ff" stroke-width="1" fill="none" shape-rendering="crispEdges"/>
<path d="M1150.5,962.5 L1174.5,962.5 L1162.5,974.5 Z" stroke="#0000ff" stroke-width="1" fill="none" shape-rendering="crispEdges"/>



<path d="M1123.5,870.5 L1127.0,875.5 L1130.5,870.5" stroke="#000080" stroke-width="1" fill="none" shape-rendering="crispEdges"/>
<path d="M1139.5,870.5 L1143.0,875.5 L1146.5,870.5" stroke="#000080" stroke-width="1" fill="none" shape-rendering="crispEdges"/>
<path d="M1215.5,869.5 L1215.5,876.5 L1257.5,876.5 L1257.5,869.5" stroke="#0000ff" stroke-width="1" fill="none" shape-rendering="crispEdges"/>
<path d="M1303.5,876.5 L1314.5,870.5" stroke="#000080" stroke-width="1" fill="none" shape-rendering="crispEdges"/>
<path d="M1303.5,869.5 L1303.5,876.5" stroke="#000080" stroke-width="1" fill="none" shape-rendering="crispEdges"/>
<path d="M1319.5,869.5 L1319.5,876.5" stroke="#000080" stroke-width="1" fill="none" shape-rendering="crispEdges"/>

<path d="M1386.5,869.5 L1386.5,994.5" stroke="#0000ff" stroke-width="1" fill="none" shape-rendering="crispEdges"/>
<path d="M1182.5,869.5 L1182.5,984.5" stroke="#0000ff" stroke-width="1" fill="none" shape-rendering="crispEdges"/>
<path d="M1182.5,984.5 L1182.5,994.5 L1161.5,994.5" stroke="#000080" stroke-width="1" fill="none" shape-rendering="crispEdges"/>
<path d="M1161.5,989.5 L1161.5,999.5" stroke="#000080" stroke-width="1" fill="none" shape-rendering="crispEdges"/>
<path d="M1161.5,1010.5 L1161.5,1021.5" stroke="#000080" stroke-width="1" fill="none" shape-rendering="crispEdges"/>
<path d="M1161.5,1032.5 L1161.5,1042.5" stroke="#000080" stroke-width="1" fill="none" shape-rendering="crispEdges"/>
<path d="M1156.5,994.5 L1156.5,1037.5 L1151.5,1037.5" stroke="#000080" stroke-width="1" fill="none" shape-rendering="crispEdges"/>
<path d="M1097.5,1037.5 L1151.5,1037.5" stroke="#0000ff" stroke-width="1" fill="none" shape-rendering="crispEdges"/>
<path d="M1161.5,1037.5 L1182.5,1037.5" stroke="#000080" stroke-width="1" fill="none" shape-rendering="crispEdges"/>
<path d="M1162.5,1015.5 L1177.5,1013.0 L1177.5,1018.5 L1164.5,1016.0" stroke="#000080" stroke-width="1" fill="none" shape-rendering="crispEdges"/>
<path d="M1177.5,1015.5 L1182.5,1015.5 L1182.5,1048.5" stroke="#000080" stroke-width="1" fill="none" shape-rendering="crispEdges"/>
<path d="M1097.5,1080.5 L1150.5,1080.5 L1150.5,1048.5 L1182.5,1048.5" stroke="#0000ff" stroke-width="1" fill="none" shape-rendering="crispEdges"/>
<rect x="1179" y="1045" width="7" height="7" fill="#0000ff"/>
<path d="M1182.5,1048.5 L1182.5,1059.5" stroke="#0000ff" stroke-width="1" fill="none" shape-rendering="crispEdges"/>
<path d="M1182.5,1059.5 L1182.5,1064.8 L1193.2,1070.2 L1171.8,1080.9 L1193.2,1091.6 L1171.8,1102.3 L1182.5,1107.7 L1182.5,1113.0" stroke="#000080" stroke-width="1" fill="none" shape-rendering="crispEdges"/>
<path d="M1170.5,1112.5 L1194.5,1112.5 L1182.5,1124.5 Z" stroke="#0000ff" stroke-width="1" fill="none" shape-rendering="crispEdges"/>




<path d="M1450.5,869.5 L1450.5,888.5" stroke="#0000ff" stroke-width="1" fill="none" shape-rendering="crispEdges"/>
<path d="M1450.5,888.5 L1450.5,907.2" stroke="#000080" stroke-width="1" fill="none" shape-rendering="crispEdges"/><path d="M1439.5,907.2 L1461.5,907.2" stroke="#000080" stroke-width="1" fill="none" shape-rendering="crispEdges"/><path d="M1439.5,912.5 L1461.5,912.5" stroke="#000080" stroke-width="1" fill="none" shape-rendering="crispEdges"/><path d="M1450.5,912.5 L1450.5,931.3" stroke="#000080" stroke-width="1" fill="none" shape-rendering="crispEdges"/>
<path d="M1450.5,931.5 L1450.5,951.5" stroke="#0000ff" stroke-width="1" fill="none" shape-rendering="crispEdges"/>
<path d="M1438.5,951.5 L1462.5,951.5 L1450.5,963.5 Z" stroke="#0000ff" stroke-width="1" fill="none" shape-rendering="crispEdges"/>


<path d="M1504.5,869.5 L1504.5,888.5" stroke="#0000ff" stroke-width="1" fill="none" shape-rendering="crispEdges"/>
<path d="M1504.5,888.5 L1504.5,907.2" stroke="#000080" stroke-width="1" fill="none" shape-rendering="crispEdges"/><path d="M1493.5,907.2 L1515.5,907.2" stroke="#000080" stroke-width="1" fill="none" shape-rendering="crispEdges"/><path d="M1493.5,912.5 L1515.5,912.5" stroke="#000080" stroke-width="1" fill="none" shape-rendering="crispEdges"/><path d="M1504.5,912.5 L1504.5,931.3" stroke="#000080" stroke-width="1" fill="none" shape-rendering="crispEdges"/>
<path d="M1504.5,931.5 L1504.5,951.5" stroke="#0000ff" stroke-width="1" fill="none" shape-rendering="crispEdges"/>
<path d="M1492.5,951.5 L1516.5,951.5 L1504.5,963.5 Z" stroke="#0000ff" stroke-width="1" fill="none" shape-rendering="crispEdges"/>


<path d="M1601.5,869.5 L1601.5,888.5" stroke="#0000ff" stroke-width="1" fill="none" shape-rendering="crispEdges"/>
<path d="M1601.5,888.5 L1601.5,907.2" stroke="#000080" stroke-width="1" fill="none" shape-rendering="crispEdges"/><path d="M1590.5,907.2 L1612.5,907.2" stroke="#000080" stroke-width="1" fill="none" shape-rendering="crispEdges"/><path d="M1590.5,912.5 L1612.5,912.5" stroke="#000080" stroke-width="1" fill="none" shape-rendering="crispEdges"/><path d="M1601.5,912.5 L1601.5,931.3" stroke="#000080" stroke-width="1" fill="none" shape-rendering="crispEdges"/>
<path d="M1589.5,930.5 L1613.5,930.5 L1601.5,942.5 Z" stroke="#0000ff" stroke-width="1" fill="none" shape-rendering="crispEdges"/>


<path d="M1665.5,869.5 L1665.5,888.5" stroke="#0000ff" stroke-width="1" fill="none" shape-rendering="crispEdges"/>
<path d="M1665.5,888.5 L1665.5,907.2" stroke="#000080" stroke-width="1" fill="none" shape-rendering="crispEdges"/><path d="M1654.5,907.2 L1676.5,907.2" stroke="#000080" stroke-width="1" fill="none" shape-rendering="crispEdges"/><path d="M1654.5,912.5 L1676.5,912.5" stroke="#000080" stroke-width="1" fill="none" shape-rendering="crispEdges"/><path d="M1665.5,912.5 L1665.5,931.3" stroke="#000080" stroke-width="1" fill="none" shape-rendering="crispEdges"/>
<path d="M1665.5,931.5 L1665.5,951.5" stroke="#0000ff" stroke-width="1" fill="none" shape-rendering="crispEdges"/>
<path d="M1653.5,951.5 L1677.5,951.5 L1665.5,963.5 Z" stroke="#0000ff" stroke-width="1" fill="none" shape-rendering="crispEdges"/>


<path d="M1718.5,869.5 L1718.5,888.5" stroke="#0000ff" stroke-width="1" fill="none" shape-rendering="crispEdges"/>
<path d="M1718.5,888.5 L1718.5,907.2" stroke="#000080" stroke-width="1" fill="none" shape-rendering="crispEdges"/><path d="M1707.5,907.2 L1729.5,907.2" stroke="#000080" stroke-width="1" fill="none" shape-rendering="crispEdges"/><path d="M1707.5,912.5 L1729.5,912.5" stroke="#000080" stroke-width="1" fill="none" shape-rendering="crispEdges"/><path d="M1718.5,912.5 L1718.5,931.3" stroke="#000080" stroke-width="1" fill="none" shape-rendering="crispEdges"/>
<path d="M1718.5,931.5 L1718.5,951.5" stroke="#0000ff" stroke-width="1" fill="none" shape-rendering="crispEdges"/>
<path d="M1706.5,951.5 L1730.5,951.5 L1718.5,963.5 Z" stroke="#0000ff" stroke-width="1" fill="none" shape-rendering="crispEdges"/>


<path d="M1836.5,869.5 L1836.5,888.5" stroke="#0000ff" stroke-width="1" fill="none" shape-rendering="crispEdges"/>
<path d="M1836.5,888.5 L1836.5,907.2" stroke="#000080" stroke-width="1" fill="none" shape-rendering="crispEdges"/><path d="M1825.5,907.2 L1847.5,907.2" stroke="#000080" stroke-width="1" fill="none" shape-rendering="crispEdges"/><path d="M1825.5,912.5 L1847.5,912.5" stroke="#000080" stroke-width="1" fill="none" shape-rendering="crispEdges"/><path d="M1836.5,912.5 L1836.5,931.3" stroke="#000080" stroke-width="1" fill="none" shape-rendering="crispEdges"/>
<path d="M1836.5,931.5 L1836.5,951.5" stroke="#0000ff" stroke-width="1" fill="none" shape-rendering="crispEdges"/>
<path d="M1824.5,951.5 L1848.5,951.5 L1836.5,963.5 Z" stroke="#0000ff" stroke-width="1" fill="none" shape-rendering="crispEdges"/>


<path d="M1890.5,869.5 L1890.5,888.5" stroke="#0000ff" stroke-width="1" fill="none" shape-rendering="crispEdges"/>
<path d="M1890.5,888.5 L1890.5,907.2" stroke="#000080" stroke-width="1" fill="none" shape-rendering="crispEdges"/><path d="M1879.5,907.2 L1901.5,907.2" stroke="#000080" stroke-width="1" fill="none" shape-rendering="crispEdges"/><path d="M1879.5,912.5 L1901.5,912.5" stroke="#000080" stroke-width="1" fill="none" shape-rendering="crispEdges"/><path d="M1890.5,912.5 L1890.5,931.3" stroke="#000080" stroke-width="1" fill="none" shape-rendering="crispEdges"/>
<path d="M1890.5,931.5 L1890.5,951.5" stroke="#0000ff" stroke-width="1" fill="none" shape-rendering="crispEdges"/>
<path d="M1878.5,951.5 L1902.5,951.5 L1890.5,963.5 Z" stroke="#0000ff" stroke-width="1" fill="none" shape-rendering="crispEdges"/>


<path d="M1944.5,869.5 L1944.5,888.5" stroke="#0000ff" stroke-width="1" fill="none" shape-rendering="crispEdges"/>
<path d="M1944.5,888.5 L1944.5,907.2" stroke="#000080" stroke-width="1" fill="none" shape-rendering="crispEdges"/><path d="M1933.5,907.2 L1955.5,907.2" stroke="#000080" stroke-width="1" fill="none" shape-rendering="crispEdges"/><path d="M1933.5,912.5 L1955.5,912.5" stroke="#000080" stroke-width="1" fill="none" shape-rendering="crispEdges"/><path d="M1944.5,912.5 L1944.5,931.3" stroke="#000080" stroke-width="1" fill="none" shape-rendering="crispEdges"/>
<path d="M1944.5,931.5 L1944.5,951.5" stroke="#0000ff" stroke-width="1" fill="none" shape-rendering="crispEdges"/>
<path d="M1932.5,951.5 L1956.5,951.5 L1944.5,963.5 Z" stroke="#0000ff" stroke-width="1" fill="none" shape-rendering="crispEdges"/>


<path d="M1997.5,869.5 L1997.5,888.5" stroke="#0000ff" stroke-width="1" fill="none" shape-rendering="crispEdges"/>
<path d="M1997.5,888.5 L1997.5,907.2" stroke="#000080" stroke-width="1" fill="none" shape-rendering="crispEdges"/><path d="M1986.5,907.2 L2008.5,907.2" stroke="#000080" stroke-width="1" fill="none" shape-rendering="crispEdges"/><path d="M1986.5,912.5 L2008.5,912.5" stroke="#000080" stroke-width="1" fill="none" shape-rendering="crispEdges"/><path d="M1997.5,912.5 L1997.5,931.3" stroke="#000080" stroke-width="1" fill="none" shape-rendering="crispEdges"/>
<path d="M1997.5,931.5 L1997.5,951.5" stroke="#0000ff" stroke-width="1" fill="none" shape-rendering="crispEdges"/>
<path d="M1985.5,951.5 L2009.5,951.5 L1997.5,963.5 Z" stroke="#0000ff" stroke-width="1" fill="none" shape-rendering="crispEdges"/>


<path d="M2126.5,869.5 L2126.5,887.5 L2330.5,887.5 L2330.5,1080.5 L1279.5,1080.5 L1279.5,1112.5 L1247.5,1112.5 L1247.5,1187.5" stroke="#0000ff" stroke-width="1" fill="none" shape-rendering="crispEdges"/>
<rect x="2145.5" y="938.5" width="4" height="4" stroke="#0000ff" stroke-width="1" fill="none"/>
<path d="M2148,938 C2150,931 2157,930 2162,930.5 C2165,931 2166,932 2167.5,934.5 C2171,939 2171,945 2167.5,948 C2164,945 2163,939 2167.5,934.5 C2170,931 2174,930.5 2177,930.5 C2180,931 2182,932 2183.5,934.5 C2187,939 2187,945 2183.5,948 C2180,945 2179,939 2183.5,934.5 C2186,931 2190,930.5 2193,930.5 C2197,931 2199,935 2201.5,940.5" stroke="#000080" stroke-width="1.1" fill="none"/>
<path d="M2201.5,940.5 L2222.5,940.5 L2222.5,963.5" stroke="#0000ff" stroke-width="1" fill="none" shape-rendering="crispEdges"/>
<path d="M2222.5,963.5 L2222.5,982.2" stroke="#000080" stroke-width="1" fill="none" shape-rendering="crispEdges"/><path d="M2211.5,982.2 L2233.5,982.2" stroke="#000080" stroke-width="1" fill="none" shape-rendering="crispEdges"/><path d="M2211.5,987.5 L2233.5,987.5" stroke="#000080" stroke-width="1" fill="none" shape-rendering="crispEdges"/><path d="M2222.5,987.5 L2222.5,1006.3" stroke="#000080" stroke-width="1" fill="none" shape-rendering="crispEdges"/>
<path d="M2222.5,1005.5 L2222.5,1026.5" stroke="#0000ff" stroke-width="1" fill="none" shape-rendering="crispEdges"/>
<path d="M2210.5,1026.5 L2234.5,1026.5 L2222.5,1038.5 Z" stroke="#0000ff" stroke-width="1" fill="none" shape-rendering="crispEdges"/>




<path d="M2051.5,1156.5 L2051.5,1133.5 L2265.5,1133.5 L2265.5,1156.5" stroke="#0000ff" stroke-width="1" fill="none" shape-rendering="crispEdges"/>
<rect x="2101" y="1130" width="7" height="7" fill="#0000ff"/>
<path d="M2104.5,1133.5 L2104.5,1156.5" stroke="#0000ff" stroke-width="1" fill="none" shape-rendering="crispEdges"/>
<rect x="2155" y="1130" width="7" height="7" fill="#0000ff"/>
<path d="M2158.5,1133.5 L2158.5,1156.5" stroke="#0000ff" stroke-width="1" fill="none" shape-rendering="crispEdges"/>
<rect x="2209" y="1130" width="7" height="7" fill="#0000ff"/>
<path d="M2212.5,1133.5 L2212.5,1156.5" stroke="#0000ff" stroke-width="1" fill="none" shape-rendering="crispEdges"/>
<path d="M2051.5,1156.5 L2051.5,1175.2" stroke="#000080" stroke-width="1" fill="none" shape-rendering="crispEdges"/><path d="M2040.5,1175.2 L2062.5,1175.2" stroke="#000080" stroke-width="1" fill="none" shape-rendering="crispEdges"/><path d="M2040.5,1180.5 L2062.5,1180.5" stroke="#000080" stroke-width="1" fill="none" shape-rendering="crispEdges"/><path d="M2051.5,1180.5 L2051.5,1199.3" stroke="#000080" stroke-width="1" fill="none" shape-rendering="crispEdges"/>
<path d="M2039.5,1198.5 L2063.5,1198.5 L2051.5,1210.5 Z" stroke="#0000ff" stroke-width="1" fill="none" shape-rendering="crispEdges"/>


<path d="M2104.5,1156.5 L2104.5,1175.2" stroke="#000080" stroke-width="1" fill="none" shape-rendering="crispEdges"/><path d="M2093.5,1175.2 L2115.5,1175.2" stroke="#000080" stroke-width="1" fill="none" shape-rendering="crispEdges"/><path d="M2093.5,1180.5 L2115.5,1180.5" stroke="#000080" stroke-width="1" fill="none" shape-rendering="crispEdges"/><path d="M2104.5,1180.5 L2104.5,1199.3" stroke="#000080" stroke-width="1" fill="none" shape-rendering="crispEdges"/>
<path d="M2104.5,1198.5 L2104.5,1219.5" stroke="#0000ff" stroke-width="1" fill="none" shape-rendering="crispEdges"/>
<path d="M2092.5,1219.5 L2116.5,1219.5 L2104.5,1231.5 Z" stroke="#0000ff" stroke-width="1" fill="none" shape-rendering="crispEdges"/>


<path d="M2158.5,1156.5 L2158.5,1175.2" stroke="#000080" stroke-width="1" fill="none" shape-rendering="crispEdges"/><path d="M2147.5,1175.2 L2169.5,1175.2" stroke="#000080" stroke-width="1" fill="none" shape-rendering="crispEdges"/><path d="M2147.5,1180.5 L2169.5,1180.5" stroke="#000080" stroke-width="1" fill="none" shape-rendering="crispEdges"/><path d="M2158.5,1180.5 L2158.5,1199.3" stroke="#000080" stroke-width="1" fill="none" shape-rendering="crispEdges"/>
<path d="M2158.5,1198.5 L2158.5,1219.5" stroke="#0000ff" stroke-width="1" fill="none" shape-rendering="crispEdges"/>
<path d="M2146.5,1219.5 L2170.5,1219.5 L2158.5,1231.5 Z" stroke="#0000ff" stroke-width="1" fill="none" shape-rendering="crispEdges"/>


<path d="M2212.5,1156.5 L2212.5,1175.2" stroke="#000080" stroke-width="1" fill="none" shape-rendering="crispEdges"/><path d="M2201.5,1175.2 L2223.5,1175.2" stroke="#000080" stroke-width="1" fill="none" shape-rendering="crispEdges"/><path d="M2201.5,1180.5 L2223.5,1180.5" stroke="#000080" stroke-width="1" fill="none" shape-rendering="crispEdges"/><path d="M2212.5,1180.5 L2212.5,1199.3" stroke="#000080" stroke-width="1" fill="none" shape-rendering="crispEdges"/>
<path d="M2212.5,1198.5 L2212.5,1219.5" stroke="#0000ff" stroke-width="1" fill="none" shape-rendering="crispEdges"/>
<path d="M2200.5,1219.5 L2224.5,1219.5 L2212.5,1231.5 Z" stroke="#0000ff" stroke-width="1" fill="none" shape-rendering="crispEdges"/>


<path d="M2265.5,1156.5 L2265.5,1175.2" stroke="#000080" stroke-width="1" fill="none" shape-rendering="crispEdges"/><path d="M2254.5,1175.2 L2276.5,1175.2" stroke="#000080" stroke-width="1" fill="none" shape-rendering="crispEdges"/><path d="M2254.5,1180.5 L2276.5,1180.5" stroke="#000080" stroke-width="1" fill="none" shape-rendering="crispEdges"/><path d="M2265.5,1180.5 L2265.5,1199.3" stroke="#000080" stroke-width="1" fill="none" shape-rendering="crispEdges"/>
<path d="M2265.5,1198.5 L2265.5,1219.5" stroke="#0000ff" stroke-width="1" fill="none" shape-rendering="crispEdges"/>
<path d="M2253.5,1219.5 L2277.5,1219.5 L2265.5,1231.5 Z" stroke="#0000ff" stroke-width="1" fill="none" shape-rendering="crispEdges"/>


<rect x="861.5" y="951.5" width="236" height="386" fill="#ffffc2" stroke="#000080" stroke-width="1"/>








<rect x="867" y="985" width="43.7" height="1.5" fill="#000"/>
<rect x="867" y="1028" width="71.8" height="1.5" fill="#000"/>











<rect x="858.5" y="1077.5" width="5" height="5" fill="#ffffc2" stroke="#0000ff" stroke-width="1"/>
<path d="M958,1155.8 L964,1150.4 L966.9,1141.1 L969,1136.1 L973,1132.9 L974.9,1132.9 L974.9,1134.8 L973.9,1135 L974.1,1138.8 L972,1141.9 L972,1144.8 L970.9,1145.4 L972,1146.2 L972.8,1150.4 L974.1,1152 L977.8,1152 L979.9,1153 L979.9,1155.8 Z" fill="#ff0000"/>
<path d="M978,1134.3 L979.1,1132.9 L999.9,1132.9 L999.9,1133.7 L998.7,1134.8 L995.8,1136.1 L993.9,1139.3 L992.6,1143.5 L991,1148 L989.7,1151.7 L987.8,1154.6 L984.9,1154.9 L984.7,1155.8 L982.9,1155.8 L982.9,1154.1 L984.9,1151.5 L986,1145.4 L986.8,1141.4 L985.4,1138.8 L982.8,1137.2 L978,1136.9 Z" fill="#ff0000"/>
<path d="M699.5,1176.5 L723.5,1176.5 L711.5,1188.5 Z" stroke="#0000ff" stroke-width="1" fill="none" shape-rendering="crispEdges"/>
<path d="M711.5,1176.5 L711.5,1166.5 L722.5,1166.5" stroke="#0000ff" stroke-width="1" fill="none" shape-rendering="crispEdges"/>
<path d="M722.5,1166.5 L741.2,1166.5" stroke="#000080" stroke-width="1" fill="none" shape-rendering="crispEdges"/><path d="M741.2,1155.5 L741.2,1177.5" stroke="#000080" stroke-width="1" fill="none" shape-rendering="crispEdges"/><path d="M746.5,1155.5 L746.5,1177.5" stroke="#000080" stroke-width="1" fill="none" shape-rendering="crispEdges"/><path d="M746.5,1166.5 L765.3,1166.5" stroke="#000080" stroke-width="1" fill="none" shape-rendering="crispEdges"/>
<path d="M765.5,1166.5 L785.5,1166.5" stroke="#0000ff" stroke-width="1" fill="none" shape-rendering="crispEdges"/>
<path d="M785.5,1166.5 L790.9,1166.5 L796.2,1155.8 L806.9,1177.2 L817.6,1155.8 L828.3,1177.2 L833.6,1166.5 L839.0,1166.5" stroke="#000080" stroke-width="1" fill="none" shape-rendering="crispEdges"/>
<path d="M838.5,1166.5 L861.5,1166.5" stroke="#0000ff" stroke-width="1" fill="none" shape-rendering="crispEdges"/>




<path d="M731.5,1219.5 L755.5,1219.5 L743.5,1231.5 Z" stroke="#0000ff" stroke-width="1" fill="none" shape-rendering="crispEdges"/>
<path d="M743.5,1219.5 L743.5,1208.5 L754.5,1208.5" stroke="#0000ff" stroke-width="1" fill="none" shape-rendering="crispEdges"/>
<path d="M754.5,1208.5 L773.2,1208.5" stroke="#000080" stroke-width="1" fill="none" shape-rendering="crispEdges"/><path d="M773.2,1197.5 L773.2,1219.5" stroke="#000080" stroke-width="1" fill="none" shape-rendering="crispEdges"/><path d="M778.5,1197.5 L778.5,1219.5" stroke="#000080" stroke-width="1" fill="none" shape-rendering="crispEdges"/><path d="M778.5,1208.5 L797.3,1208.5" stroke="#000080" stroke-width="1" fill="none" shape-rendering="crispEdges"/>
<path d="M797.5,1208.5 L861.5,1208.5" stroke="#0000ff" stroke-width="1" fill="none" shape-rendering="crispEdges"/>


<path d="M861.5,1251.5 L743.5,1251.5" stroke="#0000ff" stroke-width="1" fill="none" shape-rendering="crispEdges"/>
<path d="M743.5,1251.5 L743.5,1256.8 L754.2,1262.2 L732.8,1272.9 L754.2,1283.6 L732.8,1294.3 L743.5,1299.7 L743.5,1305.0" stroke="#000080" stroke-width="1" fill="none" shape-rendering="crispEdges"/>
<path d="M731.5,1305.5 L755.5,1305.5 L743.5,1317.5 Z" stroke="#0000ff" stroke-width="1" fill="none" shape-rendering="crispEdges"/>
<path d="M743.5,1304.5 L743.5,1305.5" stroke="#0000ff" stroke-width="1" fill="none" shape-rendering="crispEdges"/>



<path d="M861.5,1294.5 L796.5,1294.5 L796.5,1381.5" stroke="#0000ff" stroke-width="1" fill="none" shape-rendering="crispEdges"/>
<path d="M796.5,1381.5 L796.5,1385.5" stroke="#000080" stroke-width="1" fill="none" shape-rendering="crispEdges"/>
<circle cx="796.5" cy="1406.5" r="21" stroke="#000080" stroke-width="1.1" fill="none"/><path d="M790.5,1394.0 L802.5,1394.0" stroke="#000080" stroke-width="1" fill="none" shape-rendering="crispEdges"/><path d="M796.5,1388.0 L796.5,1399.5" stroke="#000080" stroke-width="1" fill="none" shape-rendering="crispEdges"/><path d="M790.5,1420.5 L802.5,1420.5" stroke="#000080" stroke-width="1" fill="none" shape-rendering="crispEdges"/>
<path d="M796.5,1427.5 L796.5,1434.5" stroke="#000080" stroke-width="1" fill="none" shape-rendering="crispEdges"/>
<path d="M784.5,1434.5 L808.5,1434.5 L796.5,1446.5 Z" stroke="#0000ff" stroke-width="1" fill="none" shape-rendering="crispEdges"/>


<path d="M979.5,1337.5 L979.5,1359.5" stroke="#0000ff" stroke-width="1" fill="none" shape-rendering="crispEdges"/>
<path d="M967.5,1359.5 L991.5,1359.5 L979.5,1371.5 Z" stroke="#0000ff" stroke-width="1" fill="none" shape-rendering="crispEdges"/>
<path d="M1097.5,1166.5 L1418.5,1166.5 L1418.5,1155.5" stroke="#0000ff" stroke-width="1" fill="none" shape-rendering="crispEdges"/>
<path d="M1418.5,1112.5 L1418.5,1131.2" stroke="#000080" stroke-width="1" fill="none" shape-rendering="crispEdges"/><path d="M1407.5,1131.2 L1429.5,1131.2" stroke="#000080" stroke-width="1" fill="none" shape-rendering="crispEdges"/><path d="M1407.5,1136.5 L1429.5,1136.5" stroke="#000080" stroke-width="1" fill="none" shape-rendering="crispEdges"/><path d="M1418.5,1136.5 L1418.5,1155.3" stroke="#000080" stroke-width="1" fill="none" shape-rendering="crispEdges"/>
<path d="M1418.5,1112.5 L1418.5,1091.5 L1343.5,1091.5" stroke="#0000ff" stroke-width="1" fill="none" shape-rendering="crispEdges"/>
<rect x="1340" y="1077" width="7" height="7" fill="#0000ff"/>
<rect x="1340" y="1088" width="7" height="7" fill="#0000ff"/>
<path d="M1343.5,1080.5 L1343.5,1101.5" stroke="#0000ff" stroke-width="1" fill="none" shape-rendering="crispEdges"/>
<path d="M1343.5,1101.5 L1343.5,1106.8 L1354.2,1112.2 L1332.8,1122.9 L1354.2,1133.6 L1332.8,1144.3 L1343.5,1149.7 L1343.5,1155.0" stroke="#000080" stroke-width="1" fill="none" shape-rendering="crispEdges"/>
<path d="M1343.5,1154.5 L1343.5,1176.5" stroke="#0000ff" stroke-width="1" fill="none" shape-rendering="crispEdges"/>
<rect x="1340" y="1163" width="7" height="7" fill="#0000ff"/>
<path d="M1343.5,1176.5 L1343.5,1181.8 L1354.2,1187.2 L1332.8,1197.9 L1354.2,1208.6 L1332.8,1219.3 L1343.5,1224.7 L1343.5,1230.0" stroke="#000080" stroke-width="1" fill="none" shape-rendering="crispEdges"/>
<path d="M1343.5,1229.5 L1343.5,1241.5" stroke="#0000ff" stroke-width="1" fill="none" shape-rendering="crispEdges"/>
<path d="M1331.5,1241.5 L1355.5,1241.5 L1343.5,1253.5 Z" stroke="#0000ff" stroke-width="1" fill="none" shape-rendering="crispEdges"/>
<path d="M1428.5,1091.5 L1452.5,1091.5 L1440.5,1103.5 Z" stroke="#0000ff" stroke-width="1" fill="none" shape-rendering="crispEdges"/>
<rect x="1437.5" y="1088.5" width="5" height="5" stroke="#0000ff" stroke-width="1" fill="none"/>






<path d="M1097.5,1208.5 L1182.5,1208.5 L1182.5,1305.5 L1247.5,1305.5" stroke="#0000ff" stroke-width="1" fill="none" shape-rendering="crispEdges"/>
<path d="M1097.5,1251.5 L1150.5,1251.5 L1150.5,1380.5 L1247.5,1380.5" stroke="#0000ff" stroke-width="1" fill="none" shape-rendering="crispEdges"/>
<path d="M1097.5,1294.5 L1129.5,1294.5 L1129.5,1475.5" stroke="#0000ff" stroke-width="1" fill="none" shape-rendering="crispEdges"/>
<path d="M1247.5,1187.5 L1247.5,1216.9" stroke="#000080" stroke-width="1" fill="none" shape-rendering="crispEdges"/><path d="M1236.8,1200.9 L1258.2,1200.9 L1247.5,1216.9 L1236.8,1200.9" stroke="#000080" stroke-width="1" fill="none" shape-rendering="crispEdges"/><path d="M1236.8,1216.9 L1258.2,1216.9" stroke="#000080" stroke-width="1" fill="none" shape-rendering="crispEdges"/><path d="M1247.5,1216.9 L1247.5,1230.3" stroke="#000080" stroke-width="1" fill="none" shape-rendering="crispEdges"/>
<path d="M1247.5,1230.5 L1247.5,1251.5" stroke="#0000ff" stroke-width="1" fill="none" shape-rendering="crispEdges"/>
<path d="M1247.5,1251.5 L1247.5,1280.9" stroke="#000080" stroke-width="1" fill="none" shape-rendering="crispEdges"/><path d="M1236.8,1264.9 L1258.2,1264.9 L1247.5,1280.9 L1236.8,1264.9" stroke="#000080" stroke-width="1" fill="none" shape-rendering="crispEdges"/><path d="M1236.8,1280.9 L1258.2,1280.9" stroke="#000080" stroke-width="1" fill="none" shape-rendering="crispEdges"/><path d="M1247.5,1280.9 L1247.5,1294.3" stroke="#000080" stroke-width="1" fill="none" shape-rendering="crispEdges"/>
<path d="M1247.5,1294.5 L1247.5,1316.5" stroke="#0000ff" stroke-width="1" fill="none" shape-rendering="crispEdges"/>
<rect x="1244" y="1302" width="7" height="7" fill="#0000ff"/>
<path d="M1247.5,1316.5 L1247.5,1321.8 L1258.2,1327.2 L1236.8,1337.9 L1258.2,1348.6 L1236.8,1359.3 L1247.5,1364.7 L1247.5,1370.0" stroke="#000080" stroke-width="1" fill="none" shape-rendering="crispEdges"/>
<path d="M1247.5,1369.5 L1247.5,1391.5" stroke="#0000ff" stroke-width="1" fill="none" shape-rendering="crispEdges"/>
<rect x="1244" y="1377" width="7" height="7" fill="#0000ff"/>
<path d="M1247.5,1391.5 L1247.5,1420.9" stroke="#000080" stroke-width="1" fill="none" shape-rendering="crispEdges"/><path d="M1236.8,1404.9 L1258.2,1404.9 L1247.5,1420.9 L1236.8,1404.9" stroke="#000080" stroke-width="1" fill="none" shape-rendering="crispEdges"/><path d="M1236.8,1420.9 L1258.2,1420.9" stroke="#000080" stroke-width="1" fill="none" shape-rendering="crispEdges"/><path d="M1247.5,1420.9 L1247.5,1434.3" stroke="#000080" stroke-width="1" fill="none" shape-rendering="crispEdges"/>
<path d="M1247.5,1434.5 L1247.5,1455.5" stroke="#0000ff" stroke-width="1" fill="none" shape-rendering="crispEdges"/>
<path d="M1247.5,1455.5 L1247.5,1484.9" stroke="#000080" stroke-width="1" fill="none" shape-rendering="crispEdges"/><path d="M1236.8,1468.9 L1258.2,1468.9 L1247.5,1484.9 L1236.8,1468.9" stroke="#000080" stroke-width="1" fill="none" shape-rendering="crispEdges"/><path d="M1236.8,1484.9 L1258.2,1484.9" stroke="#000080" stroke-width="1" fill="none" shape-rendering="crispEdges"/><path d="M1247.5,1484.9 L1247.5,1498.3" stroke="#000080" stroke-width="1" fill="none" shape-rendering="crispEdges"/>










<text x="641" y="903.8" font-family="Liberation Sans" font-size="14.7" font-weight="bold" fill="#000" stroke="#000" stroke-width="0.35" text-anchor="start" textLength="19.8" lengthAdjust="spacingAndGlyphs">V1</text>
<text x="641" y="956.5" font-family="Liberation Sans" font-size="14.7" font-weight="bold" fill="#000" stroke="#000" stroke-width="0.35" text-anchor="start" textLength="19.2" lengthAdjust="spacingAndGlyphs">30</text>
<text x="671" y="1004.8" font-family="Liberation Sans" font-size="14.7" font-weight="bold" fill="#000" stroke="#000" stroke-width="0.35" text-anchor="start" textLength="20.6" lengthAdjust="spacingAndGlyphs">R6</text>
<text x="671" y="1029.5" font-family="Liberation Sans" font-size="14.7" font-weight="bold" fill="#000" stroke="#000" stroke-width="0.35" text-anchor="start" textLength="37.9" lengthAdjust="spacingAndGlyphs">332k</text>
<text x="671" y="1079" font-family="Liberation Sans" font-size="14.7" font-weight="bold" fill="#000" stroke="#000" stroke-width="0.35" text-anchor="start" textLength="20.6" lengthAdjust="spacingAndGlyphs">R7</text>
<text x="671" y="1103.8" font-family="Liberation Sans" font-size="14.7" font-weight="bold" fill="#000" stroke="#000" stroke-width="0.35" text-anchor="start" textLength="28.3" lengthAdjust="spacingAndGlyphs">80k</text>
<text x="780" y="1022" font-family="Liberation Sans" font-size="14.7" font-weight="bold" fill="#000" stroke="#000" stroke-width="0.35" text-anchor="start" textLength="20.6" lengthAdjust="spacingAndGlyphs">R9</text>
<text x="772" y="1062.5" font-family="Liberation Sans" font-size="14.7" font-weight="bold" fill="#000" stroke="#000" stroke-width="0.35" text-anchor="start" textLength="37.9" lengthAdjust="spacingAndGlyphs">100k</text>
<text x="832" y="908.8" font-family="Liberation Sans" font-size="14.7" font-weight="bold" fill="#000" stroke="#000" stroke-width="0.35" text-anchor="start" textLength="30.2" lengthAdjust="spacingAndGlyphs">R11</text>
<text x="832" y="932.7" font-family="Liberation Sans" font-size="14.7" font-weight="bold" fill="#000" stroke="#000" stroke-width="0.35" text-anchor="start" textLength="41.1" lengthAdjust="spacingAndGlyphs">1Meg</text>
<text x="832" y="983.1" font-family="Liberation Sans" font-size="14.7" font-weight="bold" fill="#000" stroke="#000" stroke-width="0.35" text-anchor="start" textLength="30.2" lengthAdjust="spacingAndGlyphs">R10</text>
<text x="832" y="1007" font-family="Liberation Sans" font-size="14.7" font-weight="bold" fill="#000" stroke="#000" stroke-width="0.35" text-anchor="start" textLength="37.9" lengthAdjust="spacingAndGlyphs">200k</text>
<text x="898" y="886.4" font-family="Liberation Sans" font-size="14.7" font-weight="bold" fill="#000" stroke="#000" stroke-width="0.35" text-anchor="start" textLength="19.4" lengthAdjust="spacingAndGlyphs">C6</text>
<text x="930" y="886.4" font-family="Liberation Sans" font-size="14.7" font-weight="bold" fill="#000" stroke="#000" stroke-width="0.35" text-anchor="start" textLength="19.4" lengthAdjust="spacingAndGlyphs">C5</text>
<text x="899" y="919" font-family="Liberation Sans" font-size="14.7" font-weight="bold" fill="#000" stroke="#000" stroke-width="0.35" text-anchor="start" textLength="38.5" lengthAdjust="spacingAndGlyphs">100n</text>
<text x="930" y="919" font-family="Liberation Sans" font-size="14.7" font-weight="bold" fill="#000" stroke="#000" stroke-width="0.35" text-anchor="start" textLength="28.8" lengthAdjust="spacingAndGlyphs">15μ</text>
<text x="1129" y="936.4" font-family="Liberation Sans" font-size="14.7" font-weight="bold" fill="#000" stroke="#000" stroke-width="0.35" text-anchor="start" textLength="19.4" lengthAdjust="spacingAndGlyphs">C4</text>
<text x="1122.5" y="976.5" font-family="Liberation Sans" font-size="14.7" font-weight="bold" fill="#000" stroke="#000" stroke-width="0.35" text-anchor="start" textLength="34.1" lengthAdjust="spacingAndGlyphs">4.7μ</text>
<text x="1117.5" y="887.4" font-family="Liberation Sans" font-size="14.7" font-weight="bold" fill="#000" stroke="#000" stroke-width="0.35" text-anchor="start" textLength="34.1" lengthAdjust="spacingAndGlyphs">6.8μ</text>
<text x="1266" y="890.5" font-family="Liberation Sans" font-size="14.7" font-weight="bold" fill="#000" stroke="#000" stroke-width="0.35" text-anchor="start" textLength="91.9" lengthAdjust="spacingAndGlyphs">DFN5EAH02</text>
<text x="1188.5" y="1010.4" font-family="Liberation Sans" font-size="14.7" font-weight="bold" fill="#000" stroke="#000" stroke-width="0.35" text-anchor="start" textLength="22.8" lengthAdjust="spacingAndGlyphs">M1</text>
<text x="1188.5" y="1037.7" font-family="Liberation Sans" font-size="14.7" font-weight="bold" fill="#000" stroke="#000" stroke-width="0.35" text-anchor="start" textLength="107.3" lengthAdjust="spacingAndGlyphs">IPB320N20N3</text>
<text x="1196.5" y="1079.5" font-family="Liberation Sans" font-size="14.7" font-weight="bold" fill="#000" stroke="#000" stroke-width="0.35" text-anchor="start" textLength="20.6" lengthAdjust="spacingAndGlyphs">R1</text>
<text x="1196.5" y="1104.3" font-family="Liberation Sans" font-size="14.7" font-weight="bold" fill="#000" stroke="#000" stroke-width="0.35" text-anchor="start" textLength="38.8" lengthAdjust="spacingAndGlyphs">6.8m</text>
<text x="1455" y="897.7" font-family="Liberation Sans" font-size="14.7" font-weight="bold" fill="#000" stroke="#000" stroke-width="0.35" text-anchor="start" textLength="19.4" lengthAdjust="spacingAndGlyphs">C9</text>
<text x="1456" y="929.8" font-family="Liberation Sans" font-size="14.7" font-weight="bold" fill="#000" stroke="#000" stroke-width="0.35" text-anchor="start" textLength="34.1" lengthAdjust="spacingAndGlyphs">2.2μ</text>
<text x="1509" y="897.7" font-family="Liberation Sans" font-size="14.7" font-weight="bold" fill="#000" stroke="#000" stroke-width="0.35" text-anchor="start" textLength="19.4" lengthAdjust="spacingAndGlyphs">C1</text>
<text x="1510" y="929.8" font-family="Liberation Sans" font-size="14.7" font-weight="bold" fill="#000" stroke="#000" stroke-width="0.35" text-anchor="start" textLength="34.1" lengthAdjust="spacingAndGlyphs">2.2μ</text>
<text x="1606" y="897.7" font-family="Liberation Sans" font-size="14.7" font-weight="bold" fill="#000" stroke="#000" stroke-width="0.35" text-anchor="start" textLength="19.4" lengthAdjust="spacingAndGlyphs">C7</text>
<text x="1607" y="929.8" font-family="Liberation Sans" font-size="14.7" font-weight="bold" fill="#000" stroke="#000" stroke-width="0.35" text-anchor="start" textLength="34.1" lengthAdjust="spacingAndGlyphs">2.2μ</text>
<text x="1670" y="897.7" font-family="Liberation Sans" font-size="14.7" font-weight="bold" fill="#000" stroke="#000" stroke-width="0.35" text-anchor="start" textLength="29.1" lengthAdjust="spacingAndGlyphs">C16</text>
<text x="1671" y="929.8" font-family="Liberation Sans" font-size="14.7" font-weight="bold" fill="#000" stroke="#000" stroke-width="0.35" text-anchor="start" textLength="38.5" lengthAdjust="spacingAndGlyphs">100n</text>
<text x="1723" y="897.7" font-family="Liberation Sans" font-size="14.7" font-weight="bold" fill="#000" stroke="#000" stroke-width="0.35" text-anchor="start" textLength="29.1" lengthAdjust="spacingAndGlyphs">C17</text>
<text x="1724" y="929.8" font-family="Liberation Sans" font-size="14.7" font-weight="bold" fill="#000" stroke="#000" stroke-width="0.35" text-anchor="start" textLength="38.5" lengthAdjust="spacingAndGlyphs">100n</text>
<text x="1841" y="897.7" font-family="Liberation Sans" font-size="14.7" font-weight="bold" fill="#000" stroke="#000" stroke-width="0.35" text-anchor="start" textLength="29.1" lengthAdjust="spacingAndGlyphs">C11</text>
<text x="1842" y="929.8" font-family="Liberation Sans" font-size="14.7" font-weight="bold" fill="#000" stroke="#000" stroke-width="0.35" text-anchor="start" textLength="34.1" lengthAdjust="spacingAndGlyphs">2.2μ</text>
<text x="1895" y="897.7" font-family="Liberation Sans" font-size="14.7" font-weight="bold" fill="#000" stroke="#000" stroke-width="0.35" text-anchor="start" textLength="29.1" lengthAdjust="spacingAndGlyphs">C21</text>
<text x="1896" y="929.8" font-family="Liberation Sans" font-size="14.7" font-weight="bold" fill="#000" stroke="#000" stroke-width="0.35" text-anchor="start" textLength="34.1" lengthAdjust="spacingAndGlyphs">2.2μ</text>
<text x="1949" y="897.7" font-family="Liberation Sans" font-size="14.7" font-weight="bold" fill="#000" stroke="#000" stroke-width="0.35" text-anchor="start" textLength="29.1" lengthAdjust="spacingAndGlyphs">C22</text>
<text x="1950" y="929.8" font-family="Liberation Sans" font-size="14.7" font-weight="bold" fill="#000" stroke="#000" stroke-width="0.35" text-anchor="start" textLength="34.1" lengthAdjust="spacingAndGlyphs">2.2μ</text>
<text x="2002" y="897.7" font-family="Liberation Sans" font-size="14.7" font-weight="bold" fill="#000" stroke="#000" stroke-width="0.35" text-anchor="start" textLength="29.1" lengthAdjust="spacingAndGlyphs">C23</text>
<text x="2003" y="929.8" font-family="Liberation Sans" font-size="14.7" font-weight="bold" fill="#000" stroke="#000" stroke-width="0.35" text-anchor="start" textLength="34.1" lengthAdjust="spacingAndGlyphs">2.2μ</text>
<text x="2174" y="926.6" font-family="Liberation Sans" font-size="14.7" font-weight="bold" fill="#000" stroke="#000" stroke-width="0.35" text-anchor="middle" textLength="18.3" lengthAdjust="spacingAndGlyphs">L2</text>
<text x="2174" y="962.8" font-family="Liberation Sans" font-size="14.7" font-weight="bold" fill="#000" stroke="#000" stroke-width="0.35" text-anchor="middle" textLength="19.2" lengthAdjust="spacingAndGlyphs">1μ</text>
<text x="2228" y="973" font-family="Liberation Sans" font-size="14.7" font-weight="bold" fill="#000" stroke="#000" stroke-width="0.35" text-anchor="start" textLength="29.1" lengthAdjust="spacingAndGlyphs">C10</text>
<text x="2228" y="1005" font-family="Liberation Sans" font-size="14.7" font-weight="bold" fill="#000" stroke="#000" stroke-width="0.35" text-anchor="start" textLength="28.8" lengthAdjust="spacingAndGlyphs">10μ</text>
<text x="2056" y="1165.8" font-family="Liberation Sans" font-size="14.7" font-weight="bold" fill="#000" stroke="#000" stroke-width="0.35" text-anchor="start" textLength="29.1" lengthAdjust="spacingAndGlyphs">C13</text>
<text x="2057" y="1197.5" font-family="Liberation Sans" font-size="14.7" font-weight="bold" fill="#000" stroke="#000" stroke-width="0.35" text-anchor="start" textLength="28.8" lengthAdjust="spacingAndGlyphs">10n</text>
<text x="2109" y="1165.8" font-family="Liberation Sans" font-size="14.7" font-weight="bold" fill="#000" stroke="#000" stroke-width="0.35" text-anchor="start" textLength="29.1" lengthAdjust="spacingAndGlyphs">C20</text>
<text x="2110" y="1197.5" font-family="Liberation Sans" font-size="14.7" font-weight="bold" fill="#000" stroke="#000" stroke-width="0.35" text-anchor="start" textLength="34.1" lengthAdjust="spacingAndGlyphs">2.2μ</text>
<text x="2163" y="1165.8" font-family="Liberation Sans" font-size="14.7" font-weight="bold" fill="#000" stroke="#000" stroke-width="0.35" text-anchor="start" textLength="29.1" lengthAdjust="spacingAndGlyphs">C14</text>
<text x="2164" y="1197.5" font-family="Liberation Sans" font-size="14.7" font-weight="bold" fill="#000" stroke="#000" stroke-width="0.35" text-anchor="start" textLength="34.1" lengthAdjust="spacingAndGlyphs">2.2μ</text>
<text x="2217" y="1165.8" font-family="Liberation Sans" font-size="14.7" font-weight="bold" fill="#000" stroke="#000" stroke-width="0.35" text-anchor="start" textLength="29.1" lengthAdjust="spacingAndGlyphs">C15</text>
<text x="2218" y="1197.5" font-family="Liberation Sans" font-size="14.7" font-weight="bold" fill="#000" stroke="#000" stroke-width="0.35" text-anchor="start" textLength="34.1" lengthAdjust="spacingAndGlyphs">2.2μ</text>
<text x="2270" y="1165.8" font-family="Liberation Sans" font-size="14.7" font-weight="bold" fill="#000" stroke="#000" stroke-width="0.35" text-anchor="start" textLength="29.1" lengthAdjust="spacingAndGlyphs">C18</text>
<text x="2271" y="1197.5" font-family="Liberation Sans" font-size="14.7" font-weight="bold" fill="#000" stroke="#000" stroke-width="0.35" text-anchor="start" textLength="34.1" lengthAdjust="spacingAndGlyphs">2.2μ</text>
<text x="866.5" y="999.5" font-family="Liberation Sans" font-size="14.7" font-weight="bold" fill="#000" stroke="#000" stroke-width="0.35" text-anchor="start" textLength="92.5" lengthAdjust="spacingAndGlyphs">SHDN/UVLO</text>
<text x="866.5" y="1042.5" font-family="Liberation Sans" font-size="14.7" font-weight="bold" fill="#000" stroke="#000" stroke-width="0.35" text-anchor="start" textLength="71.8" lengthAdjust="spacingAndGlyphs">OPENLED</text>
<text x="866.5" y="1085.5" font-family="Liberation Sans" font-size="14.7" font-weight="bold" fill="#000" stroke="#000" stroke-width="0.35" text-anchor="start" textLength="31.2" lengthAdjust="spacingAndGlyphs">Vref</text>
<text x="866.5" y="1128.5" font-family="Liberation Sans" font-size="14.7" font-weight="bold" fill="#000" stroke="#000" stroke-width="0.35" text-anchor="start" textLength="38.6" lengthAdjust="spacingAndGlyphs">CTRL</text>
<text x="866.5" y="1171.5" font-family="Liberation Sans" font-size="14.7" font-weight="bold" fill="#000" stroke="#000" stroke-width="0.35" text-anchor="start" textLength="18.0" lengthAdjust="spacingAndGlyphs">Vc</text>
<text x="866.5" y="1213.5" font-family="Liberation Sans" font-size="14.7" font-weight="bold" fill="#000" stroke="#000" stroke-width="0.35" text-anchor="start" textLength="19.2" lengthAdjust="spacingAndGlyphs">SS</text>
<text x="866.5" y="1256.5" font-family="Liberation Sans" font-size="14.7" font-weight="bold" fill="#000" stroke="#000" stroke-width="0.35" text-anchor="start" textLength="16.9" lengthAdjust="spacingAndGlyphs">Rt</text>
<text x="866.5" y="1299.5" font-family="Liberation Sans" font-size="14.7" font-weight="bold" fill="#000" stroke="#000" stroke-width="0.35" text-anchor="start" textLength="52.3" lengthAdjust="spacingAndGlyphs">PWMin</text>
<text x="1091" y="999.5" font-family="Liberation Sans" font-size="14.7" font-weight="bold" fill="#000" stroke="#000" stroke-width="0.35" text-anchor="end" textLength="52.8" lengthAdjust="spacingAndGlyphs">INTVcc</text>
<text x="1091" y="1042.5" font-family="Liberation Sans" font-size="14.7" font-weight="bold" fill="#000" stroke="#000" stroke-width="0.35" text-anchor="end" textLength="34.7" lengthAdjust="spacingAndGlyphs">Gate</text>
<text x="1091" y="1085.5" font-family="Liberation Sans" font-size="14.7" font-weight="bold" fill="#000" stroke="#000" stroke-width="0.35" text-anchor="end" textLength="44.6" lengthAdjust="spacingAndGlyphs">Sense</text>
<text x="1091" y="1171.5" font-family="Liberation Sans" font-size="14.7" font-weight="bold" fill="#000" stroke="#000" stroke-width="0.35" text-anchor="end" textLength="19.3" lengthAdjust="spacingAndGlyphs">FB</text>
<text x="1091" y="1213.5" font-family="Liberation Sans" font-size="14.7" font-weight="bold" fill="#000" stroke="#000" stroke-width="0.35" text-anchor="end" textLength="26.0" lengthAdjust="spacingAndGlyphs">ISP</text>
<text x="1091" y="1256.5" font-family="Liberation Sans" font-size="14.7" font-weight="bold" fill="#000" stroke="#000" stroke-width="0.35" text-anchor="end" textLength="27.4" lengthAdjust="spacingAndGlyphs">ISN</text>
<text x="1091" y="1299.5" font-family="Liberation Sans" font-size="14.7" font-weight="bold" fill="#000" stroke="#000" stroke-width="0.35" text-anchor="end" textLength="63.0" lengthAdjust="spacingAndGlyphs">PWMout</text>
<text x="979.5" y="971.6" font-family="Liberation Sans" font-size="14.7" font-weight="bold" fill="#000" stroke="#000" stroke-width="0.35" text-anchor="middle" textLength="24.3" lengthAdjust="spacingAndGlyphs">Vin</text>
<text x="979.5" y="1063.3" font-family="Liberation Sans" font-size="14.7" font-weight="bold" fill="#000" stroke="#000" stroke-width="0.35" text-anchor="middle" textLength="20.8" lengthAdjust="spacingAndGlyphs">U1</text>
<text x="979.5" y="1235.5" font-family="Liberation Sans" font-size="14.7" font-weight="bold" fill="#000" stroke="#000" stroke-width="0.35" text-anchor="middle" textLength="56.4" lengthAdjust="spacingAndGlyphs">LT3756</text>
<text x="979.5" y="1328.4" font-family="Liberation Sans" font-size="14.7" font-weight="bold" fill="#000" stroke="#000" stroke-width="0.35" text-anchor="middle" textLength="33.6" lengthAdjust="spacingAndGlyphs">GND</text>
<text x="742.5" y="1151.6" font-family="Liberation Sans" font-size="14.7" font-weight="bold" fill="#000" stroke="#000" stroke-width="0.35" text-anchor="middle" textLength="19.4" lengthAdjust="spacingAndGlyphs">C2</text>
<text x="742.5" y="1190" font-family="Liberation Sans" font-size="14.7" font-weight="bold" fill="#000" stroke="#000" stroke-width="0.35" text-anchor="middle" textLength="28.8" lengthAdjust="spacingAndGlyphs">50n</text>
<text x="811.5" y="1151.6" font-family="Liberation Sans" font-size="14.7" font-weight="bold" fill="#000" stroke="#000" stroke-width="0.35" text-anchor="middle" textLength="20.6" lengthAdjust="spacingAndGlyphs">R5</text>
<text x="811.5" y="1190" font-family="Liberation Sans" font-size="14.7" font-weight="bold" fill="#000" stroke="#000" stroke-width="0.35" text-anchor="middle" textLength="28.3" lengthAdjust="spacingAndGlyphs">50k</text>
<text x="774.5" y="1194.2" font-family="Liberation Sans" font-size="14.7" font-weight="bold" fill="#000" stroke="#000" stroke-width="0.35" text-anchor="middle" textLength="19.4" lengthAdjust="spacingAndGlyphs">C3</text>
<text x="774.5" y="1233" font-family="Liberation Sans" font-size="14.7" font-weight="bold" fill="#000" stroke="#000" stroke-width="0.35" text-anchor="middle" textLength="28.8" lengthAdjust="spacingAndGlyphs">10n</text>
<text x="728.5" y="1270.2" font-family="Liberation Sans" font-size="14.7" font-weight="bold" fill="#000" stroke="#000" stroke-width="0.35" text-anchor="end" textLength="20.6" lengthAdjust="spacingAndGlyphs">R8</text>
<text x="728.5" y="1295" font-family="Liberation Sans" font-size="14.7" font-weight="bold" fill="#000" stroke="#000" stroke-width="0.35" text-anchor="end" textLength="28.3" lengthAdjust="spacingAndGlyphs">21k</text>
<text x="545" y="1289.8" font-family="Liberation Sans" font-size="14.7" font-weight="bold" fill="#0000c8" stroke="#0000c8" stroke-width="0.35" text-anchor="start" textLength="130.0" lengthAdjust="spacingAndGlyphs">21kOhm at 7.3uH</text>
<text x="812.5" y="1385.5" font-family="Liberation Sans" font-size="14.7" font-weight="bold" fill="#000" stroke="#000" stroke-width="0.35" text-anchor="start" textLength="19.8" lengthAdjust="spacingAndGlyphs">V3</text>
<text x="812.5" y="1439.6" font-family="Liberation Sans" font-size="14.7" font-weight="bold" fill="#000" stroke="#000" stroke-width="0.35" text-anchor="start" textLength="24.4" lengthAdjust="spacingAndGlyphs">3.3</text>
<text x="1357.5" y="1122.7" font-family="Liberation Sans" font-size="14.7" font-weight="bold" fill="#000" stroke="#000" stroke-width="0.35" text-anchor="start" textLength="20.6" lengthAdjust="spacingAndGlyphs">R2</text>
<text x="1357.5" y="1147" font-family="Liberation Sans" font-size="14.7" font-weight="bold" fill="#000" stroke="#000" stroke-width="0.35" text-anchor="start" textLength="41.1" lengthAdjust="spacingAndGlyphs">1Meg</text>
<text x="1424" y="1122.7" font-family="Liberation Sans" font-size="14.7" font-weight="bold" fill="#000" stroke="#000" stroke-width="0.35" text-anchor="start" textLength="29.1" lengthAdjust="spacingAndGlyphs">C12</text>
<text x="1424" y="1155.3" font-family="Liberation Sans" font-size="14.7" font-weight="bold" fill="#000" stroke="#000" stroke-width="0.35" text-anchor="start" textLength="19.1" lengthAdjust="spacingAndGlyphs">2p</text>
<text x="1357.5" y="1197.4" font-family="Liberation Sans" font-size="14.7" font-weight="bold" fill="#000" stroke="#000" stroke-width="0.35" text-anchor="start" textLength="20.6" lengthAdjust="spacingAndGlyphs">R3</text>
<text x="1357.5" y="1222.2" font-family="Liberation Sans" font-size="14.7" font-weight="bold" fill="#000" stroke="#000" stroke-width="0.35" text-anchor="start" textLength="28.3" lengthAdjust="spacingAndGlyphs">12k</text>
<text x="1252.5" y="1192.8" font-family="Liberation Sans" font-size="14.7" font-weight="bold" fill="#000" stroke="#000" stroke-width="0.35" text-anchor="start" textLength="20.9" lengthAdjust="spacingAndGlyphs">D4</text>
<text x="1252.5" y="1235.5" font-family="Liberation Sans" font-size="14.7" font-weight="bold" fill="#000" stroke="#000" stroke-width="0.35" text-anchor="start" textLength="65.1" lengthAdjust="spacingAndGlyphs">MyDiode</text>
<text x="1252.5" y="1256" font-family="Liberation Sans" font-size="14.7" font-weight="bold" fill="#000" stroke="#000" stroke-width="0.35" text-anchor="start" textLength="20.9" lengthAdjust="spacingAndGlyphs">D3</text>
<text x="1252.5" y="1299.6" font-family="Liberation Sans" font-size="14.7" font-weight="bold" fill="#000" stroke="#000" stroke-width="0.35" text-anchor="start" textLength="65.1" lengthAdjust="spacingAndGlyphs">MyDiode</text>
<text x="1260.5" y="1337.6" font-family="Liberation Sans" font-size="14.7" font-weight="bold" fill="#000" stroke="#000" stroke-width="0.35" text-anchor="start" textLength="20.6" lengthAdjust="spacingAndGlyphs">R4</text>
<text x="1260.5" y="1361.9" font-family="Liberation Sans" font-size="14.7" font-weight="bold" fill="#000" stroke="#000" stroke-width="0.35" text-anchor="start" textLength="33.6" lengthAdjust="spacingAndGlyphs">33m</text>
<text x="1252.5" y="1396.6" font-family="Liberation Sans" font-size="14.7" font-weight="bold" fill="#000" stroke="#000" stroke-width="0.35" text-anchor="start" textLength="20.9" lengthAdjust="spacingAndGlyphs">D2</text>
<text x="1252.5" y="1439.3" font-family="Liberation Sans" font-size="14.7" font-weight="bold" fill="#000" stroke="#000" stroke-width="0.35" text-anchor="start" textLength="65.1" lengthAdjust="spacingAndGlyphs">MyDiode</text>
<text x="1252.5" y="1460.6" font-family="Liberation Sans" font-size="14.7" font-weight="bold" fill="#000" stroke="#000" stroke-width="0.35" text-anchor="start" textLength="20.9" lengthAdjust="spacingAndGlyphs">D1</text>
<text x="1344" y="1412.7" font-family="Liberation Sans" font-size="14.7" font-weight="bold" fill="#000" stroke="#000" stroke-width="0.35" text-anchor="start" textLength="301.0" lengthAdjust="spacingAndGlyphs">.model MyDiode D(Ron=1.5 Vfwd=20.5)</text>
</svg>
<defs><linearGradient id="tbg" x1="0" y1="0" x2="1" y2="0"><stop offset="0" stop-color="#e1e4e1"/><stop offset="0.3" stop-color="#e2e5e2"/><stop offset="0.55" stop-color="#e6e6e0"/><stop offset="0.75" stop-color="#e4e9d6"/><stop offset="1" stop-color="#dee8c6"/></linearGradient></defs>
<rect x="0" y="1483" width="2559" height="46" fill="#f0f0f0"/>
<rect x="0" y="1529" width="2559" height="70" fill="url(#tbg)"/>
<rect x="0" y="1529" width="2559" height="1.5" fill="#c5c7c2"/>
<path d="M37,1541 Q42,1536 47,1541 L47,1567 Q54,1573 47,1582 Q42,1586 37,1582 Q30,1573 37,1567 Z" fill="#a9d4f5"/>
<rect x="40.5" y="1545" width="4" height="24" rx="2" fill="#ea6a8a"/><circle cx="42.5" cy="1572" r="5" fill="#2196f3"/>
<path d="M55.5,1562 L55.5,1575" stroke="#ff1a1a" stroke-width="3"/><path d="M51,1565 L55.5,1560 L60,1565 Z" fill="#ff1a1a"/>
<circle cx="57.5" cy="1550.5" r="12" fill="#c42b1c"/>
<text x="57.5" y="1557" font-family="Liberation Sans" font-size="16" font-weight="normal" fill="#fff" text-anchor="middle" >2</text>
<text x="77" y="1558" font-family="Liberation Sans" font-size="17.5" font-weight="normal" fill="#1b1b1b" text-anchor="start" textLength="107" lengthAdjust="spacingAndGlyphs">Temps to rise</text>
<text x="77" y="1581.5" font-family="Liberation Sans" font-size="17.5" font-weight="normal" fill="#5f5f5f" text-anchor="start" textLength="59" lengthAdjust="spacingAndGlyphs">Sunday</text>
<rect x="765" y="1547.3" width="16.6" height="16.6" rx="1" fill="#1a8ae6"/>
<rect x="783" y="1547.3" width="16.6" height="16.6" rx="1" fill="#1a8ae6"/>
<rect x="765" y="1565.3" width="16.6" height="16.6" rx="1" fill="#1a8ae6"/>
<rect x="783" y="1565.3" width="16.6" height="16.6" rx="1" fill="#1a8ae6"/>
<rect x="765" y="1547.3" width="16.6" height="16.6" rx="1" fill="#4cc2ff" opacity="0.6"/>
<rect x="820.5" y="1541.5" width="327" height="45" rx="22.5" fill="#f5f5f3" stroke="#d6d6d3" stroke-width="1"/>
<circle cx="847" cy="1561" r="8.5" fill="none" stroke="#1b1b1b" stroke-width="2.2"/><path d="M853,1567 L858.5,1573" stroke="#1b1b1b" stroke-width="2.4" stroke-linecap="round"/>
<text x="875.5" y="1571.8" font-family="Liberation Sans" font-size="20.5" font-weight="normal" fill="#5e5e5e" text-anchor="start" textLength="60" lengthAdjust="spacingAndGlyphs">Search</text>
<ellipse cx="1106" cy="1565" rx="36" ry="13" fill="#35a6d8"/><path d="M1072,1563 Q1090,1548 1108,1556 Q1118,1544 1130,1553 Q1140,1558 1142,1566 Q1115,1572 1078,1568 Z" fill="#2e8c4a"/><path d="M1080,1566 Q1100,1560 1128,1566 Q1115,1575 1090,1574 Z" fill="#e8d9a0"/><ellipse cx="1087" cy="1550" rx="8" ry="3" fill="#e5b8d6"/><ellipse cx="1132" cy="1552" rx="8" ry="3" fill="#e5b8d6"/>
<rect x="1175" y="1547" width="27" height="25" rx="2" fill="#f3f3f3" stroke="#e0e0e0"/><rect x="1166.8" y="1557" width="27" height="24" rx="2" fill="#1b1b1b"/><rect x="1175" y="1557" width="19" height="15" fill="#c9c9c9"/>
<path d="M1232,1549 L1246,1549 L1249,1552 L1269,1552 L1269,1581 L1232,1581 Z" fill="#e8a92e"/><rect x="1232" y="1555" width="37" height="26" fill="#ffd34d"/><rect x="1242" y="1571" width="17" height="10" rx="2" fill="#1a73c9"/>
<circle cx="1317" cy="1563.6" r="18" fill="#db4437"/><path d="M1317,1563.6 L1301.4,1554.6 A18,18 0 0,0 1317,1581.6 Z" fill="#0f9d58"/><path d="M1317,1563.6 L1317,1581.6 A18,18 0 0,0 1332.6,1554.6 Z" fill="#ffcd40"/><path d="M1317,1563.6 L1301.4,1554.6 A18,18 0 0,1 1332.6,1554.6 Z" fill="#db4437"/><circle cx="1317" cy="1563.6" r="8" fill="#fff"/><circle cx="1317" cy="1563.6" r="6.3" fill="#4285f4"/>
<circle cx="1383" cy="1563.7" r="18" fill="#1e8fd9"/><path d="M1366,1560 Q1372,1545 1388,1546 Q1401,1548 1401,1562 L1385,1562 Q1378,1558 1374,1566 Q1374,1578 1390,1580 Q1375,1584 1368,1574 Z" fill="#3ccf6e" opacity="0.9"/><path d="M1371,1568 Q1376,1556 1388,1560 Q1380,1562 1382,1572 Q1387,1580 1398,1578 Q1390,1584 1380,1582 Q1370,1578 1371,1568 Z" fill="#0c59a4"/>
<rect x="1439" y="1548" width="28" height="31" rx="2" fill="#2b7cd3"/><rect x="1439" y="1558" width="28" height="11" fill="#185abd"/><rect x="1439" y="1569" width="28" height="10" fill="#103f91"/><rect x="1431" y="1555" width="18" height="18" rx="2" fill="#185abd"/>
<text x="1440" y="1569.5" font-family="Liberation Sans" font-size="13" font-weight="bold" fill="#fff" text-anchor="middle" >W</text>
<path d="M1497,1567 L1510,1556 L1521,1547 L1532,1574 L1524,1570 L1515,1580 L1508,1567 Z" fill="#d9622b"/><path d="M1497,1567 L1507,1562 L1512,1569 L1505,1572 Z" fill="#4a9ad6"/><path d="M1515,1553 L1521,1547 L1525,1562 L1517,1572 Z" fill="#f5b73b"/>
<path d="M1590,1546 L1598,1550 L1598,1578 L1590,1582 L1572,1566 L1564,1572 L1562,1569 L1570,1564 L1562,1557 L1564,1555 L1572,1561 Z" fill="#1f9cf0"/><path d="M1590,1555 L1576,1564 L1590,1573 Z" fill="#e3e6e1"/>
<circle cx="1648" cy="1563.5" r="16" fill="#ed6c47"/><path d="M1648,1563.5 L1664,1563.5 A16,16 0 0,1 1648,1579.5 Z" fill="#c43e1c"/><path d="M1648,1547.5 A16,16 0 0,1 1664,1563.5 L1648,1563.5 Z" fill="#ff8f6b"/><rect x="1629" y="1555" width="18" height="18" rx="2" fill="#c43e1c"/>
<text x="1638" y="1569.5" font-family="Liberation Sans" font-size="13" font-weight="bold" fill="#fff" text-anchor="middle" >P</text>
<rect x="1697" y="1548" width="32" height="31" rx="6" fill="#00979c"/><circle cx="1706.5" cy="1563.5" r="5.5" fill="none" stroke="#e6f3f3" stroke-width="2"/><circle cx="1719.5" cy="1563.5" r="5.5" fill="none" stroke="#e6f3f3" stroke-width="2"/>
<rect x="1751" y="1536" width="56" height="56" rx="5" fill="#f0f2ea" stroke="#e2e5d8" stroke-width="1"/>
<path d="M1762.5,1547 L1762.5,1581 L1791,1563" fill="none" stroke="#111" stroke-width="1.6"/>
<path transform="translate(1762,1546) scale(0.82,0.72)" d="M0.0,22.9 L6.0,17.5 L8.9,8.2 L11.0,3.2 L15.0,0.0 L16.9,0.0 L16.9,1.9 L15.9,2.1 L16.1,5.9 L14.0,9.0 L14.0,11.9 L12.9,12.5 L14.0,13.3 L14.8,17.5 L16.1,19.1 L19.8,19.1 L21.9,20.1 L21.9,22.9 Z M20.0,1.4 L21.1,0.0 L41.9,0.0 L41.9,0.8 L40.7,1.9 L37.8,3.2 L35.9,6.4 L34.6,10.6 L33.0,15.1 L31.7,18.8 L29.8,21.7 L26.9,22.0 L26.7,22.9 L24.9,22.9 L24.9,21.2 L26.9,18.6 L28.0,12.5 L28.8,8.5 L27.4,5.9 L24.8,4.3 L20.0,4.0 Z" fill="#8b0000"/>
<rect x="1767" y="1588.5" width="24" height="4" rx="2" fill="#2a86a8"/>
<rect x="1245.5" y="1588.5" width="9" height="4" rx="2" fill="#858585"/>
<rect x="1312.5" y="1588.5" width="9" height="4" rx="2" fill="#858585"/>
<rect x="1378.5" y="1588.5" width="9" height="4" rx="2" fill="#858585"/>
<rect x="1444.5" y="1588.5" width="9" height="4" rx="2" fill="#858585"/>
<rect x="1510.5" y="1588.5" width="9" height="4" rx="2" fill="#858585"/>
<rect x="1576.5" y="1588.5" width="9" height="4" rx="2" fill="#858585"/>
<rect x="1642.5" y="1588.5" width="9" height="4" rx="2" fill="#858585"/>
<rect x="1708.5" y="1588.5" width="9" height="4" rx="2" fill="#858585"/>
<path d="M2217,1567 L2225,1559.5 L2233,1567" stroke="#1b1b1b" stroke-width="1.6" fill="none"/>
<text x="2282" y="1559.2" font-family="Liberation Sans" font-size="16.5" font-weight="normal" fill="#1b1b1b" text-anchor="middle" >ENG</text>
<text x="2282" y="1581.9" font-family="Liberation Sans" font-size="16.5" font-weight="normal" fill="#1b1b1b" text-anchor="middle" >US</text>
<rect x="2327.5" y="1553" width="17" height="18" rx="2" fill="none" stroke="#1b1b1b" stroke-width="1.4"/><path d="M2331,1575 L2345,1575 M2338,1571 L2338,1575" stroke="#1b1b1b" stroke-width="1.4"/><rect x="2344.5" y="1552" width="6" height="8" rx="1.5" fill="#e0e8c8" stroke="#1b1b1b" stroke-width="1.3"/><path d="M2347.5,1560 L2347.5,1576" stroke="#1b1b1b" stroke-width="1.3"/>
<path d="M2363,1559 L2367,1559 L2373,1554 L2373,1571 L2367,1566 L2363,1566 Z" fill="none" stroke="#1b1b1b" stroke-width="1.4"/><path d="M2376,1558 Q2379,1562.5 2376,1567" stroke="#1b1b1b" stroke-width="1.4" fill="none"/><path d="M2380,1554 Q2386,1562.5 2380,1572" stroke="#9aa" stroke-width="1.2" fill="none"/>
<rect x="2400" y="1557" width="20" height="13" rx="2.5" fill="none" stroke="#1b1b1b" stroke-width="1.4"/><rect x="2403" y="1560" width="14" height="7" fill="#1b1b1b"/><rect x="2420.5" y="1561" width="2.5" height="5" fill="#1b1b1b"/><path d="M2403,1556 L2406,1552 L2405,1556 L2408,1556" stroke="#1b1b1b" stroke-width="1.2" fill="none"/>
<text x="2530" y="1557.6" font-family="Liberation Sans" font-size="17" font-weight="normal" fill="#1b1b1b" text-anchor="end" textLength="73.5" lengthAdjust="spacingAndGlyphs">10:32 PM</text>
<text x="2530" y="1581" font-family="Liberation Sans" font-size="17" font-weight="normal" fill="#1b1b1b" text-anchor="end" textLength="82" lengthAdjust="spacingAndGlyphs">6/19/2025</text>
</svg></body></html>
